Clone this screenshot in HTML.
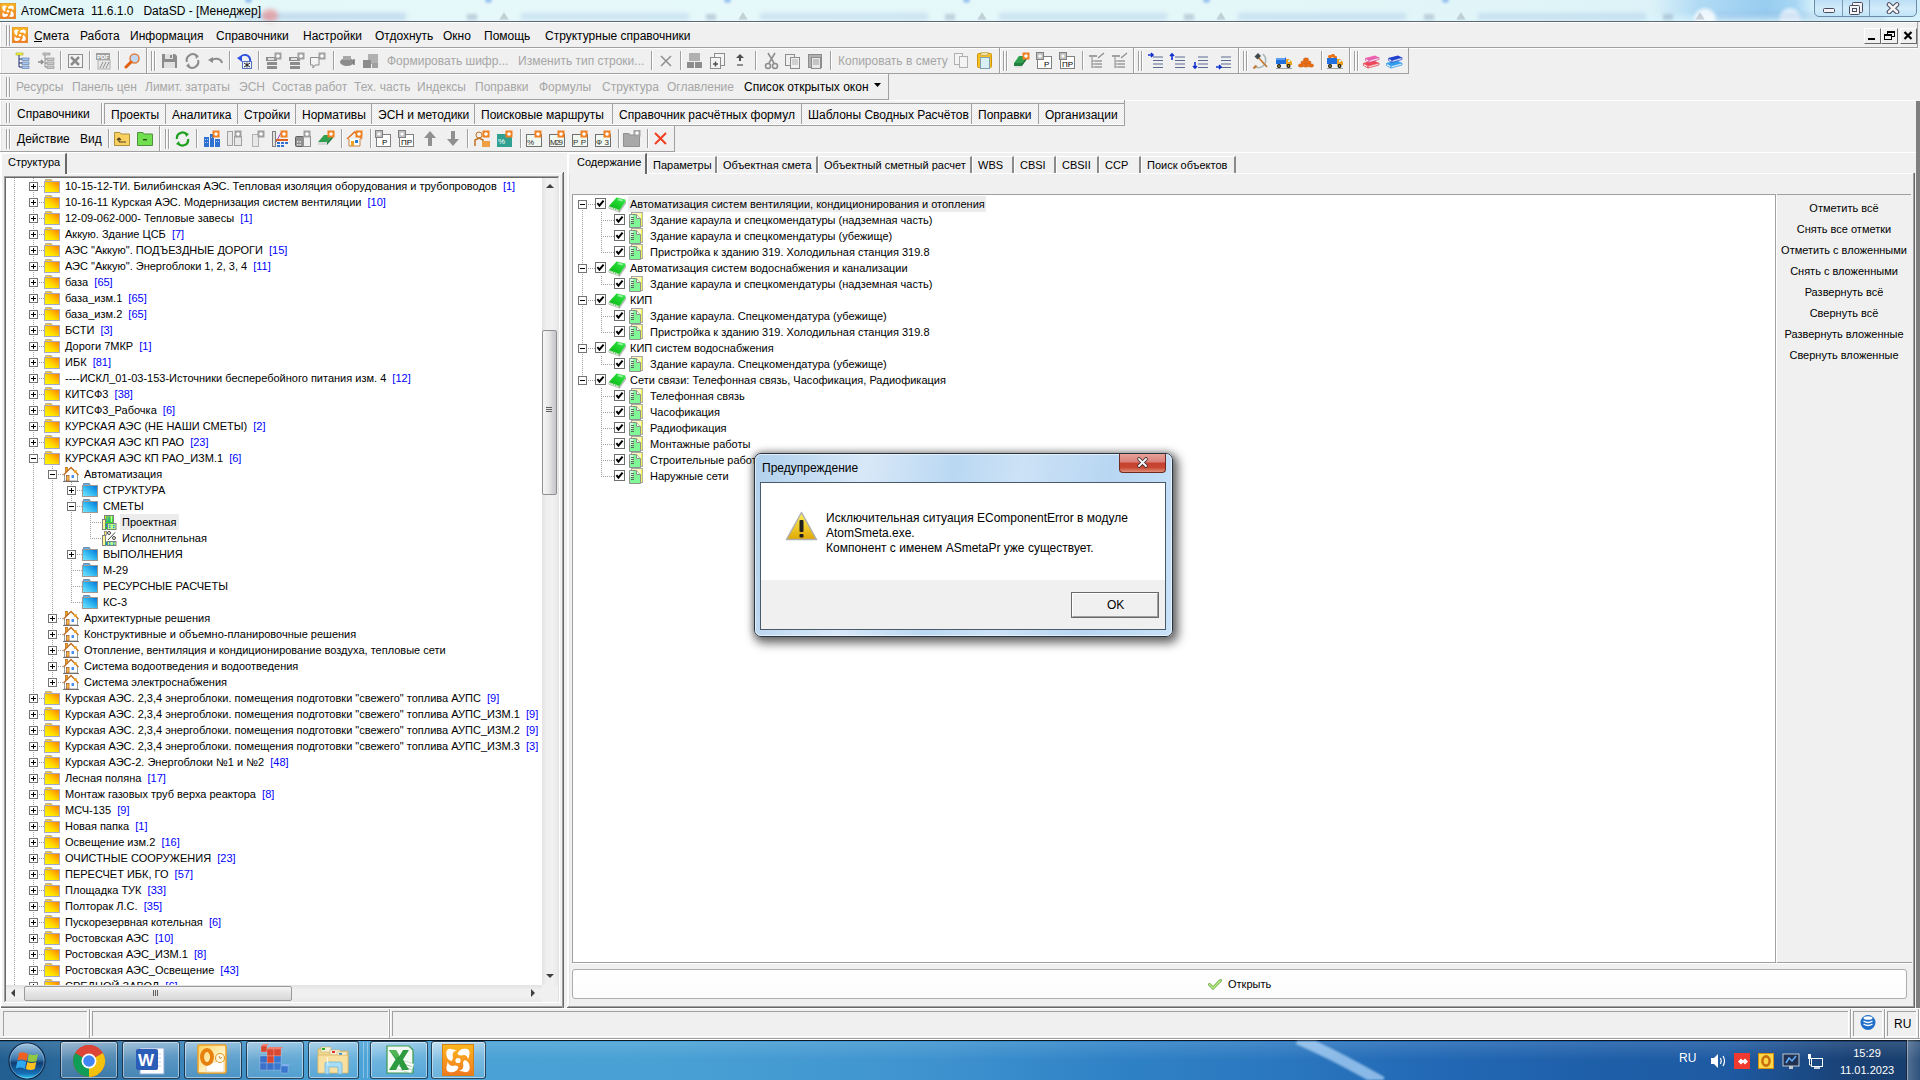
<!DOCTYPE html><html><head><meta charset="utf-8"><style>html,body{margin:0;padding:0;width:1920px;height:1080px;overflow:hidden;background:#f0f0f0}
body{position:relative;font-family:"Liberation Sans",sans-serif}
div{position:absolute}
.t{white-space:nowrap;line-height:1;font-family:"Liberation Sans",sans-serif}</style></head><body><div style="left:0px;top:0px;width:1920px;height:21px;background:linear-gradient(90deg,#e2f6f8 0%,#e6f8fa 30%,#e4f7f9 60%,#e0f5f8 80%,#dcf2f8 86%,#b0daf4 88.5%,#98cdf0 92%,#a8d6f4 93.5%,#d8f2fa 94.5%,#d0eefa 100%)"></div>
<div style="left:1640px;top:0px;width:280px;height:21px;background:radial-gradient(circle at 65px 19px,rgba(255,255,255,0.75) 0 8px,transparent 13px),radial-gradient(circle at 150px 19px,rgba(255,255,255,0.7) 0 8px,transparent 13px),linear-gradient(180deg,rgba(255,255,255,0) 60%,rgba(220,245,252,0.8) 100%)"></div>
<div style="left:467px;top:14px;width:10px;height:6px;background:rgba(120,140,170,0.35);filter:blur(1.5px)"></div>
<div style="left:499px;top:12px;width:10px;height:8px;background:rgba(110,120,135,0.3);clip-path:polygon(50% 0,100% 100%,0 100%);filter:blur(1px)"></div>
<div style="left:521px;top:13px;width:168px;height:7px;background:rgba(120,160,215,0.22);filter:blur(2px)"></div>
<div style="left:706px;top:14px;width:10px;height:6px;background:rgba(120,140,170,0.35);filter:blur(1.5px)"></div>
<div style="left:738px;top:12px;width:10px;height:8px;background:rgba(110,120,135,0.3);clip-path:polygon(50% 0,100% 100%,0 100%);filter:blur(1px)"></div>
<div style="left:760px;top:13px;width:168px;height:7px;background:rgba(120,160,215,0.22);filter:blur(2px)"></div>
<div style="left:945px;top:14px;width:10px;height:6px;background:rgba(120,140,170,0.35);filter:blur(1.5px)"></div>
<div style="left:977px;top:12px;width:10px;height:8px;background:rgba(110,120,135,0.3);clip-path:polygon(50% 0,100% 100%,0 100%);filter:blur(1px)"></div>
<div style="left:999px;top:13px;width:168px;height:7px;background:rgba(120,160,215,0.22);filter:blur(2px)"></div>
<div style="left:1184px;top:14px;width:10px;height:6px;background:rgba(120,140,170,0.35);filter:blur(1.5px)"></div>
<div style="left:1216px;top:12px;width:10px;height:8px;background:rgba(110,120,135,0.3);clip-path:polygon(50% 0,100% 100%,0 100%);filter:blur(1px)"></div>
<div style="left:1238px;top:13px;width:168px;height:7px;background:rgba(120,160,215,0.22);filter:blur(2px)"></div>
<div style="left:1424px;top:14px;width:10px;height:6px;background:rgba(120,140,170,0.35);filter:blur(1.5px)"></div>
<div style="left:1456px;top:12px;width:10px;height:8px;background:rgba(110,120,135,0.3);clip-path:polygon(50% 0,100% 100%,0 100%);filter:blur(1px)"></div>
<div style="left:1478px;top:13px;width:168px;height:7px;background:rgba(120,160,215,0.22);filter:blur(2px)"></div>
<div style="left:1663px;top:14px;width:10px;height:6px;background:rgba(120,140,170,0.35);filter:blur(1.5px)"></div>
<div style="left:1695px;top:12px;width:10px;height:8px;background:rgba(110,120,135,0.3);clip-path:polygon(50% 0,100% 100%,0 100%);filter:blur(1px)"></div>
<div style="left:1717px;top:13px;width:168px;height:7px;background:rgba(120,160,215,0.22);filter:blur(2px)"></div>
<div style="left:236px;top:13px;width:170px;height:7px;background:rgba(120,160,215,0.3);filter:blur(2px)"></div>
<div style="left:262px;top:9px;width:16px;height:13px;background:rgba(240,120,120,0.55);border-radius:50%;filter:blur(2px)"></div>
<div style="left:245px;top:-3px;width:7px;height:6px;background:rgba(90,150,230,0.5);border-radius:50%;filter:blur(1px)"></div>
<div style="left:485px;top:-3px;width:7px;height:6px;background:rgba(90,150,230,0.5);border-radius:50%;filter:blur(1px)"></div>
<div style="left:724px;top:-3px;width:7px;height:6px;background:rgba(90,150,230,0.5);border-radius:50%;filter:blur(1px)"></div>
<div style="left:963px;top:-3px;width:7px;height:6px;background:rgba(90,150,230,0.5);border-radius:50%;filter:blur(1px)"></div>
<div style="left:1203px;top:-3px;width:7px;height:6px;background:rgba(90,150,230,0.5);border-radius:50%;filter:blur(1px)"></div>
<div style="left:1442px;top:-3px;width:7px;height:6px;background:rgba(90,150,230,0.5);border-radius:50%;filter:blur(1px)"></div>
<div style="left:0px;top:21px;width:1920px;height:1px;background:#5b6670"></div>
<svg style="position:absolute;left:0px;top:3px" width="16" height="16" viewBox="0 0 16 16"><defs><linearGradient id="ga1" x1="0" y1="0" x2="0" y2="1"><stop offset="0" stop-color="#fdb81e"/><stop offset="1" stop-color="#f07820"/></linearGradient></defs>
<svg viewBox="0 0 32 32" width="16" height="16"><rect x="0.5" y="0.5" width="31" height="31" fill="url(#ga1)" stroke="#d88010"/>
<g fill="#fff"><path d="M15.5 9.5 Q17.5 4.5 23.5 4.8 Q28 5 27.6 9.5 L26.2 15.5 Q25 10.5 20.5 11.2 Q16.5 12.2 15.5 9.5 Z" transform="rotate(0 16 16.5)"/><path d="M15.5 9.5 Q17.5 4.5 23.5 4.8 Q28 5 27.6 9.5 L26.2 15.5 Q25 10.5 20.5 11.2 Q16.5 12.2 15.5 9.5 Z" transform="rotate(90 16 16.5)"/><path d="M15.5 9.5 Q17.5 4.5 23.5 4.8 Q28 5 27.6 9.5 L26.2 15.5 Q25 10.5 20.5 11.2 Q16.5 12.2 15.5 9.5 Z" transform="rotate(180 16 16.5)"/><path d="M15.5 9.5 Q17.5 4.5 23.5 4.8 Q28 5 27.6 9.5 L26.2 15.5 Q25 10.5 20.5 11.2 Q16.5 12.2 15.5 9.5 Z" transform="rotate(270 16 16.5)"/><circle cx="16" cy="16.5" r="2.6"/></g></svg></svg>
<div class="t" style="left:21px;top:5px;font-size:12px;color:#000;white-space:pre">АтомСмета  11.6.1.0   DataSD - [Менеджер]</div>
<div style="left:1814px;top:-4px;width:103px;height:21px;border:1px solid #6a8ca8;border-radius:0 0 5px 5px;background:linear-gradient(180deg,#b4daf4,#d2ecfa 60%,#c0e4f8);box-sizing:border-box"></div>
<div style="left:1842px;top:0px;width:1px;height:16px;background:#7a9ab8"></div>
<div style="left:1869px;top:0px;width:1px;height:16px;background:#7a9ab8"></div>
<svg style="position:absolute;left:1820px;top:3px" width="20" height="12" viewBox="0 0 20 12"><rect x="3.5" y="5.5" width="11" height="4" rx="1" fill="#f4f4f4" stroke="#4a4a60"/></svg>
<svg style="position:absolute;left:1847px;top:1px" width="18" height="14" viewBox="0 0 18 14"><rect x="5.5" y="1.5" width="10" height="10" rx="1" fill="#f4f4f4" stroke="#4a4a60"/><rect x="2.5" y="4.5" width="10" height="9" rx="1" fill="#f4f4f4" stroke="#4a4a60"/><rect x="5.5" y="7.5" width="4" height="3" fill="none" stroke="#4a4a60"/></svg>
<svg style="position:absolute;left:1884px;top:2px" width="18" height="12" viewBox="0 0 18 12"><path d="M5 2.5 L13 10 M13 2.5 L5 10" stroke="#4a4a60" stroke-width="4.6" stroke-linecap="round"/><path d="M5 2.5 L13 10 M13 2.5 L5 10" stroke="#f4f4f4" stroke-width="2.6" stroke-linecap="round"/></svg>
<div style="left:0px;top:22px;width:1918px;height:1px;background:#ffffff"></div>
<div style="left:0px;top:22px;width:1px;height:990px;background:#ffffff"></div>
<div style="left:1px;top:22px;width:1px;height:990px;background:#e3e3e3"></div>
<div style="left:6px;top:25px;width:1px;height:21px;background:#a0a0a0"></div>
<div style="left:7px;top:25px;width:1px;height:21px;background:#ffffff"></div>
<div style="left:9px;top:25px;width:1px;height:21px;background:#a0a0a0"></div>
<div style="left:10px;top:25px;width:1px;height:21px;background:#ffffff"></div>
<svg style="position:absolute;left:12px;top:27px" width="16" height="16" viewBox="0 0 16 16"><defs><linearGradient id="ga2" x1="0" y1="0" x2="0" y2="1"><stop offset="0" stop-color="#fdb81e"/><stop offset="1" stop-color="#f07820"/></linearGradient></defs>
<svg viewBox="0 0 32 32" width="16" height="16"><rect x="0.5" y="0.5" width="31" height="31" fill="url(#ga2)" stroke="#d88010"/>
<g fill="#fff"><path d="M15.5 9.5 Q17.5 4.5 23.5 4.8 Q28 5 27.6 9.5 L26.2 15.5 Q25 10.5 20.5 11.2 Q16.5 12.2 15.5 9.5 Z" transform="rotate(0 16 16.5)"/><path d="M15.5 9.5 Q17.5 4.5 23.5 4.8 Q28 5 27.6 9.5 L26.2 15.5 Q25 10.5 20.5 11.2 Q16.5 12.2 15.5 9.5 Z" transform="rotate(90 16 16.5)"/><path d="M15.5 9.5 Q17.5 4.5 23.5 4.8 Q28 5 27.6 9.5 L26.2 15.5 Q25 10.5 20.5 11.2 Q16.5 12.2 15.5 9.5 Z" transform="rotate(180 16 16.5)"/><path d="M15.5 9.5 Q17.5 4.5 23.5 4.8 Q28 5 27.6 9.5 L26.2 15.5 Q25 10.5 20.5 11.2 Q16.5 12.2 15.5 9.5 Z" transform="rotate(270 16 16.5)"/><circle cx="16" cy="16.5" r="2.6"/></g></svg></svg>
<div class="t" style="left:34px;top:30px;font-size:12px;color:#000;">Смета</div>
<div class="t" style="left:80px;top:30px;font-size:12px;color:#000;">Работа</div>
<div class="t" style="left:130px;top:30px;font-size:12px;color:#000;">Информация</div>
<div class="t" style="left:216px;top:30px;font-size:12px;color:#000;">Справочники</div>
<div class="t" style="left:303px;top:30px;font-size:12px;color:#000;">Настройки</div>
<div class="t" style="left:375px;top:30px;font-size:12px;color:#000;">Отдохнуть</div>
<div class="t" style="left:443px;top:30px;font-size:12px;color:#000;">Окно</div>
<div class="t" style="left:484px;top:30px;font-size:12px;color:#000;">Помощь</div>
<div class="t" style="left:545px;top:30px;font-size:12px;color:#000;">Структурные справочники</div>
<div style="left:34px;top:41px;width:8px;height:1px;background:#000"></div>
<div style="left:0px;top:47px;width:1918px;height:1px;background:#a0a0a0"></div>
<div style="left:0px;top:48px;width:1918px;height:1px;background:#ffffff"></div>
<div style="left:1864px;top:28px;width:17px;height:16px;box-sizing:border-box;border:1px solid;border-color:#fff #696969 #696969 #fff;background:#f0f0f0"></div>
<div style="left:1881px;top:28px;width:17px;height:16px;box-sizing:border-box;border:1px solid;border-color:#fff #696969 #696969 #fff;background:#f0f0f0"></div>
<div style="left:1900px;top:28px;width:17px;height:16px;box-sizing:border-box;border:1px solid;border-color:#fff #696969 #696969 #fff;background:#f0f0f0"></div>
<svg style="position:absolute;left:1864px;top:28px" width="17" height="16" viewBox="0 0 17 16"><rect x="4" y="10" width="7" height="2" fill="#000"/></svg>
<svg style="position:absolute;left:1881px;top:28px" width="17" height="16" viewBox="0 0 17 16"><rect x="6.5" y="3.5" width="7" height="5" fill="none" stroke="#000"/><rect x="6" y="3" width="8" height="2" fill="#000"/><rect x="3.5" y="6.5" width="7" height="5" fill="#f0f0f0" stroke="#000"/><rect x="3" y="6" width="8" height="2" fill="#000"/></svg>
<svg style="position:absolute;left:1900px;top:28px" width="17" height="16" viewBox="0 0 17 16"><path d="M4.5 4 L11.5 11 M11.5 4 L4.5 11" stroke="#000" stroke-width="2.2"/></svg>
<div style="left:1917px;top:22px;width:1px;height:25px;background:#a0a0a0"></div>
<svg style="position:absolute;left:15px;top:52px" width="18" height="18" viewBox="0 0 18 18"><rect x="1" y="1" width="7" height="2" fill="#ffff40" stroke="#909000" stroke-width="0.5"/><path d="M4 3 V15 M4 7 H7 M4 11 H7 M4 15 H7" stroke="#203070" stroke-width="1"/><rect x="7" y="6" width="7" height="2.5" fill="#a8c8f0" stroke="#5070a0" stroke-width="0.6"/><rect x="7" y="10" width="7" height="2.5" fill="#a8c8f0" stroke="#5070a0" stroke-width="0.6"/><rect x="7" y="14" width="7" height="2.5" fill="#a8c8f0" stroke="#5070a0" stroke-width="0.6"/></svg>
<svg style="position:absolute;left:37px;top:52px" width="18" height="18" viewBox="0 0 18 18"><rect x="6" y="1" width="7" height="2" fill="#c8c8c8" stroke="#8c8c8c" stroke-width="0.6"/><path d="M8 3 V15 M8 7 H10 M8 11 H10 M8 15 H10" stroke="#8c8c8c"/><rect x="10" y="6" width="7" height="2.5" fill="#c8c8c8" stroke="#8c8c8c" stroke-width="0.6"/><rect x="10" y="10" width="7" height="2.5" fill="#c8c8c8" stroke="#8c8c8c" stroke-width="0.6"/><rect x="10" y="14" width="7" height="2.5" fill="#c8c8c8" stroke="#8c8c8c" stroke-width="0.6"/><path d="M1 10 H6 M4 8 L6 10 L4 12" stroke="#8c8c8c" stroke-width="1.5" fill="none"/></svg>
<div style="left:60px;top:51px;width:1px;height:19px;background:#a0a0a0"></div>
<div style="left:61px;top:51px;width:1px;height:19px;background:#ffffff"></div>
<svg style="position:absolute;left:67px;top:52px" width="18" height="18" viewBox="0 0 18 18"><rect x="1.5" y="2.5" width="14" height="13" fill="#f4f4f4" stroke="#8c8c8c"/><path d="M4 5 L12 13 M12 5 L4 13" stroke="#8c8c8c" stroke-width="2.5"/></svg>
<div style="left:89px;top:51px;width:1px;height:19px;background:#a0a0a0"></div>
<div style="left:90px;top:51px;width:1px;height:19px;background:#ffffff"></div>
<svg style="position:absolute;left:95px;top:52px" width="18" height="18" viewBox="0 0 18 18"><rect x="1" y="1" width="14" height="7" fill="#a0a0a0"/><text x="2" y="7" font-size="6" font-family="Liberation Sans" font-weight="bold" fill="#fff">PDF</text><rect x="3" y="8" width="12" height="9" fill="#e8e8e8" stroke="#b0b0b0"/><path d="M5 16 L8 10 M8 16 L11 10 M11 16 L14 10" stroke="#8c8c8c"/></svg>
<div style="left:118px;top:51px;width:1px;height:19px;background:#a0a0a0"></div>
<div style="left:119px;top:51px;width:1px;height:19px;background:#ffffff"></div>
<svg style="position:absolute;left:124px;top:52px" width="18" height="18" viewBox="0 0 18 18"><circle cx="10.5" cy="6.5" r="4.5" fill="#c0d8f8" stroke="#e08040" stroke-width="1.5"/><path d="M7 10 L2 15" stroke="#e06010" stroke-width="3" stroke-linecap="round"/></svg>
<div style="left:0px;top:48px;width:146px;height:1px;background:#ffffff"></div>
<div style="left:0px;top:48px;width:1px;height:25px;background:#ffffff"></div>
<div style="left:0px;top:73px;width:147px;height:1px;background:#a0a0a0"></div>
<div style="left:146px;top:48px;width:1px;height:26px;background:#a0a0a0"></div>
<div style="left:147px;top:48px;width:852px;height:1px;background:#ffffff"></div>
<div style="left:147px;top:48px;width:1px;height:25px;background:#ffffff"></div>
<div style="left:147px;top:73px;width:853px;height:1px;background:#a0a0a0"></div>
<div style="left:999px;top:48px;width:1px;height:26px;background:#a0a0a0"></div>
<div style="left:151px;top:51px;width:1px;height:20px;background:#a0a0a0"></div>
<div style="left:152px;top:51px;width:1px;height:20px;background:#ffffff"></div>
<div style="left:154px;top:51px;width:1px;height:20px;background:#a0a0a0"></div>
<div style="left:155px;top:51px;width:1px;height:20px;background:#ffffff"></div>
<svg style="position:absolute;left:161px;top:52px" width="18" height="18" viewBox="0 0 18 18"><path d="M1 2 H14 L16 4 V16 H1 Z" fill="#8c8c8c"/><rect x="4" y="2" width="8" height="5" fill="#e0e0e0"/><rect x="9" y="3" width="2" height="3" fill="#8c8c8c"/><rect x="3" y="10" width="11" height="6" fill="#e0e0e0"/></svg>
<svg style="position:absolute;left:184px;top:52px" width="18" height="18" viewBox="0 0 18 18"><path d="M3 10 A6 6 0 0 1 13 4" stroke="#8c8c8c" stroke-width="2" fill="none"/><path d="M14 8 A6 6 0 0 1 4 14" stroke="#8c8c8c" stroke-width="2" fill="none"/><path d="M11 2 L15 4 L12 7 Z" fill="#8c8c8c"/><path d="M6 16 L2 14 L5 11 Z" fill="#8c8c8c"/></svg>
<svg style="position:absolute;left:207px;top:52px" width="18" height="18" viewBox="0 0 18 18"><path d="M4 9 A6 5 0 0 1 15 11" stroke="#8c8c8c" stroke-width="2" fill="none"/><path d="M1 8 L6 5 L6 11 Z" fill="#8c8c8c"/></svg>
<div style="left:229px;top:51px;width:1px;height:19px;background:#a0a0a0"></div>
<div style="left:230px;top:51px;width:1px;height:19px;background:#ffffff"></div>
<svg style="position:absolute;left:236px;top:52px" width="18" height="18" viewBox="0 0 18 18"><path d="M4 7 A5 5 0 0 1 14 9" stroke="#3050e0" stroke-width="2" fill="none"/><path d="M1 6 L6 3 L6 10 Z" fill="#3050e0"/><rect x="6.5" y="9.5" width="9" height="7" fill="#f0f4ff" stroke="#5070c0"/><path d="M8 11 L14 15 M14 11 L8 15 M11 10.5 V15.5" stroke="#202020" stroke-width="1"/></svg>
<div style="left:258px;top:51px;width:1px;height:19px;background:#a0a0a0"></div>
<div style="left:259px;top:51px;width:1px;height:19px;background:#ffffff"></div>
<svg style="position:absolute;left:265px;top:52px" width="18" height="18" viewBox="0 0 18 18"><rect x="1" y="5" width="11" height="4" fill="#8c8c8c"/><rect x="2" y="10" width="10" height="3" fill="#8c8c8c"/><rect x="2" y="14" width="10" height="3" fill="#8c8c8c"/><rect x="3" y="6" width="6" height="2" fill="#e0e0e0"/><rect x="9.5" y="0.5" width="7" height="7" fill="#a0a0a0"/><circle cx="13" cy="4" r="1.8" fill="#fff"/></svg>
<svg style="position:absolute;left:288px;top:52px" width="18" height="18" viewBox="0 0 18 18"><rect x="1" y="5" width="11" height="4" fill="#8c8c8c"/><rect x="2" y="10" width="10" height="3" fill="#8c8c8c"/><rect x="2" y="14" width="10" height="3" fill="#8c8c8c"/><rect x="3" y="6" width="6" height="2" fill="#e0e0e0"/><rect x="9.5" y="0.5" width="7" height="7" fill="#a0a0a0"/><circle cx="13" cy="4" r="1.8" fill="#fff"/></svg>
<svg style="position:absolute;left:309px;top:52px" width="18" height="18" viewBox="0 0 18 18"><path d="M1.5 5.5 H10 V13 H6 L4 16 V13 H1.5 Z" fill="#f4f4f4" stroke="#8c8c8c"/><rect x="9.5" y="0.5" width="7" height="7" fill="#a0a0a0"/><circle cx="13" cy="4" r="1.8" fill="#fff"/></svg>
<div style="left:333px;top:51px;width:1px;height:19px;background:#a0a0a0"></div>
<div style="left:334px;top:51px;width:1px;height:19px;background:#ffffff"></div>
<svg style="position:absolute;left:339px;top:52px" width="18" height="18" viewBox="0 0 18 18"><ellipse cx="8" cy="10" rx="7" ry="4" fill="#8c8c8c"/><rect x="4" y="4" width="8" height="4" fill="#a8a8a8"/><path d="M15 7 V13" stroke="#404040"/></svg>
<svg style="position:absolute;left:362px;top:52px" width="18" height="18" viewBox="0 0 18 18"><rect x="6" y="2" width="10" height="10" fill="#b0b0b0"/><rect x="1" y="8" width="8" height="8" fill="#8c8c8c"/><rect x="10" y="11" width="6" height="5" fill="#a0a0a0"/></svg>
<div class="t" style="left:387px;top:55px;font-size:12px;color:#a6a6a6;">Формировать шифр...</div>
<div class="t" style="left:518px;top:55px;font-size:12px;color:#a6a6a6;">Изменить тип строки...</div>
<div style="left:651px;top:51px;width:1px;height:19px;background:#a0a0a0"></div>
<div style="left:652px;top:51px;width:1px;height:19px;background:#ffffff"></div>
<svg style="position:absolute;left:657px;top:52px" width="18" height="18" viewBox="0 0 18 18"><path d="M4 4 L14 14 M14 4 L4 14" stroke="#909090" stroke-width="1.5"/></svg>
<div style="left:680px;top:51px;width:1px;height:19px;background:#a0a0a0"></div>
<div style="left:681px;top:51px;width:1px;height:19px;background:#ffffff"></div>
<svg style="position:absolute;left:686px;top:52px" width="18" height="18" viewBox="0 0 18 18"><rect x="3" y="1" width="11" height="8" fill="#b0b0b0"/><rect x="1" y="10" width="7" height="6" fill="#8c8c8c"/><rect x="9" y="10" width="7" height="6" fill="#8c8c8c"/></svg>
<svg style="position:absolute;left:709px;top:52px" width="18" height="18" viewBox="0 0 18 18"><rect x="5.5" y="1.5" width="10" height="12" fill="#f4f4f4" stroke="#8c8c8c"/><rect x="1.5" y="5.5" width="10" height="11" fill="#f4f4f4" stroke="#8c8c8c"/><path d="M4 12 H9 M6.5 9.5 V14.5" stroke="#505050" stroke-width="1.5"/></svg>
<svg style="position:absolute;left:731px;top:52px" width="18" height="18" viewBox="0 0 18 18"><path d="M9 2 L13 6 H5 Z" fill="#505050"/><rect x="8" y="6" width="2" height="3" fill="#505050"/><rect x="6" y="12" width="6" height="2" fill="#909090"/></svg>
<div style="left:755px;top:51px;width:1px;height:19px;background:#a0a0a0"></div>
<div style="left:756px;top:51px;width:1px;height:19px;background:#ffffff"></div>
<svg style="position:absolute;left:763px;top:52px" width="18" height="18" viewBox="0 0 18 18"><path d="M5 1 L11 11 M12 1 L6 11" stroke="#8c8c8c" stroke-width="1.5"/><circle cx="5" cy="14" r="2.5" fill="none" stroke="#8c8c8c" stroke-width="1.5"/><circle cx="12" cy="14" r="2.5" fill="none" stroke="#8c8c8c" stroke-width="1.5"/></svg>
<svg style="position:absolute;left:784px;top:52px" width="18" height="18" viewBox="0 0 18 18"><rect x="1.5" y="2.5" width="9" height="11" fill="#f0f0f0" stroke="#8c8c8c"/><rect x="6.5" y="5.5" width="9" height="11" fill="#f0f0f0" stroke="#8c8c8c"/><path d="M8 8 H14 M8 10 H14 M8 12 H14" stroke="#b0b0b0"/></svg>
<svg style="position:absolute;left:807px;top:52px" width="18" height="18" viewBox="0 0 18 18"><rect x="1.5" y="2.5" width="13" height="13" fill="#b0b0b0" stroke="#8c8c8c"/><rect x="4.5" y="5.5" width="9" height="11" fill="#e8e8e8" stroke="#8c8c8c"/><path d="M6 8 H12 M6 10 H12 M6 12 H12" stroke="#a0a0a0"/></svg>
<div style="left:830px;top:51px;width:1px;height:19px;background:#a0a0a0"></div>
<div style="left:831px;top:51px;width:1px;height:19px;background:#ffffff"></div>
<div class="t" style="left:838px;top:55px;font-size:12px;color:#a6a6a6;">Копировать в смету</div>
<svg style="position:absolute;left:953px;top:52px" width="18" height="18" viewBox="0 0 18 18"><rect x="1.5" y="1.5" width="8" height="11" fill="#f4f4f4" stroke="#b0b0b0"/><rect x="6.5" y="4.5" width="8" height="11" fill="#f4f4f4" stroke="#b0b0b0"/></svg>
<svg style="position:absolute;left:976px;top:52px" width="18" height="18" viewBox="0 0 18 18"><rect x="1.5" y="1.5" width="14" height="14" rx="1" fill="#f8c020" stroke="#d09010"/><rect x="5" y="0.5" width="7" height="3" fill="#f0e0a0" stroke="#c0a040" stroke-width="0.6"/><rect x="4.5" y="5.5" width="9" height="11" fill="#d8f0f4" stroke="#80a0b0"/></svg>
<div style="left:1000px;top:48px;width:133px;height:1px;background:#ffffff"></div>
<div style="left:1000px;top:48px;width:1px;height:25px;background:#ffffff"></div>
<div style="left:1000px;top:73px;width:134px;height:1px;background:#a0a0a0"></div>
<div style="left:1133px;top:48px;width:1px;height:26px;background:#a0a0a0"></div>
<div style="left:1003px;top:51px;width:1px;height:20px;background:#a0a0a0"></div>
<div style="left:1004px;top:51px;width:1px;height:20px;background:#ffffff"></div>
<div style="left:1006px;top:51px;width:1px;height:20px;background:#a0a0a0"></div>
<div style="left:1007px;top:51px;width:1px;height:20px;background:#ffffff"></div>
<svg style="position:absolute;left:1013px;top:52px" width="18" height="18" viewBox="0 0 18 18"><path d="M1 11 L6 4 H14 L9 11 Z" fill="#30a050"/><path d="M1 11 H9 V14 H1 Z" fill="#208040"/><path d="M9 11 L14 4 V7 L9 14 Z" fill="#187030"/><path d="M2 14 H9 V16 H2 Z" fill="#e0e0e0"/><rect x="9.5" y="0.5" width="7" height="7" fill="#f08020"/><circle cx="13" cy="4" r="1.8" fill="#fff"/></svg>
<svg style="position:absolute;left:1036px;top:52px" width="18" height="18" viewBox="0 0 18 18"><rect x="1.5" y="4.5" width="14" height="12" fill="#fff" stroke="#808080"/><text x="8" y="15" font-size="8" font-family="Liberation Sans" fill="#000">P</text><rect x="0.5" y="0.5" width="7" height="7" fill="#c0c0c0" stroke="#808080"/><circle cx="4" cy="4" r="1.6" fill="#fff"/></svg>
<svg style="position:absolute;left:1059px;top:52px" width="18" height="18" viewBox="0 0 18 18"><rect x="1.5" y="4.5" width="14" height="12" fill="#fff" stroke="#808080"/><text x="3" y="15" font-size="8" font-family="Liberation Sans" fill="#000">ПР</text><rect x="0.5" y="0.5" width="7" height="7" fill="#c0c0c0" stroke="#808080"/><circle cx="4" cy="4" r="1.6" fill="#fff"/></svg>
<div style="left:1082px;top:51px;width:1px;height:19px;background:#a0a0a0"></div>
<div style="left:1083px;top:51px;width:1px;height:19px;background:#ffffff"></div>
<svg style="position:absolute;left:1088px;top:52px" width="18" height="18" viewBox="0 0 18 18"><rect x="1" y="3" width="8" height="2" fill="#a0a0a0"/><path d="M4 5 V16 M4 9 H7 M4 12 H7 M4 15 H7" stroke="#8c8c8c"/><rect x="7" y="8" width="7" height="2" fill="#b0b0b0"/><rect x="7" y="11" width="7" height="2" fill="#b0b0b0"/><rect x="7" y="14" width="7" height="2" fill="#b0b0b0"/><path d="M10 6 L16 1" stroke="#8c8c8c" stroke-width="1.2"/></svg>
<svg style="position:absolute;left:1111px;top:52px" width="18" height="18" viewBox="0 0 18 18"><rect x="1" y="3" width="8" height="2" fill="#a0a0a0"/><path d="M4 5 V16 M4 9 H7 M4 12 H7 M4 15 H7" stroke="#8c8c8c"/><rect x="7" y="8" width="7" height="2" fill="#b0b0b0"/><rect x="7" y="11" width="7" height="2" fill="#b0b0b0"/><rect x="7" y="14" width="7" height="2" fill="#b0b0b0"/><path d="M10 6 L16 1" stroke="#8c8c8c" stroke-width="1.2"/></svg>
<div style="left:1134px;top:48px;width:104px;height:1px;background:#ffffff"></div>
<div style="left:1134px;top:48px;width:1px;height:25px;background:#ffffff"></div>
<div style="left:1134px;top:73px;width:105px;height:1px;background:#a0a0a0"></div>
<div style="left:1238px;top:48px;width:1px;height:26px;background:#a0a0a0"></div>
<div style="left:1138px;top:51px;width:1px;height:20px;background:#a0a0a0"></div>
<div style="left:1139px;top:51px;width:1px;height:20px;background:#ffffff"></div>
<div style="left:1141px;top:51px;width:1px;height:20px;background:#a0a0a0"></div>
<div style="left:1142px;top:51px;width:1px;height:20px;background:#ffffff"></div>
<svg style="position:absolute;left:1147px;top:52px" width="18" height="18" viewBox="0 0 18 18"><path d="M6 5 H16 M6 8.5 H16 M6 12 H16 M6 15.5 H16" stroke="#5a6a90" stroke-width="1.2"/><path d="M1 3 H6 M4 1 L6 3 L4 5" stroke="#1030d0" stroke-width="1.6" fill="none"/></svg>
<svg style="position:absolute;left:1169px;top:52px" width="18" height="18" viewBox="0 0 18 18"><path d="M6 5 H16 M6 8.5 H16 M6 12 H16 M6 15.5 H16" stroke="#5a6a90" stroke-width="1.2"/><path d="M3 8 V2 M1 4 L3 2 L5 4" stroke="#1030d0" stroke-width="1.6" fill="none"/></svg>
<svg style="position:absolute;left:1192px;top:52px" width="18" height="18" viewBox="0 0 18 18"><path d="M6 5 H16 M6 8.5 H16 M6 12 H16 M6 15.5 H16" stroke="#5a6a90" stroke-width="1.2"/><path d="M3 10 V16 M1 14 L3 16 L5 14" stroke="#1030d0" stroke-width="1.6" fill="none"/></svg>
<svg style="position:absolute;left:1215px;top:52px" width="18" height="18" viewBox="0 0 18 18"><path d="M6 5 H16 M6 8.5 H16 M6 12 H16 M6 15.5 H16" stroke="#5a6a90" stroke-width="1.2"/><path d="M1 15 H6 M4 13 L6 15 L4 17" stroke="#1030d0" stroke-width="1.6" fill="none"/></svg>
<div style="left:1239px;top:48px;width:110px;height:1px;background:#ffffff"></div>
<div style="left:1239px;top:48px;width:1px;height:25px;background:#ffffff"></div>
<div style="left:1239px;top:73px;width:111px;height:1px;background:#a0a0a0"></div>
<div style="left:1349px;top:48px;width:1px;height:26px;background:#a0a0a0"></div>
<div style="left:1243px;top:51px;width:1px;height:20px;background:#a0a0a0"></div>
<div style="left:1244px;top:51px;width:1px;height:20px;background:#ffffff"></div>
<div style="left:1246px;top:51px;width:1px;height:20px;background:#a0a0a0"></div>
<div style="left:1247px;top:51px;width:1px;height:20px;background:#ffffff"></div>
<svg style="position:absolute;left:1252px;top:52px" width="18" height="18" viewBox="0 0 18 18"><path d="M4 15 C10 18 18 10 11 2" stroke="#a8b8b8" stroke-width="1.6" fill="none"/><path d="M1.5 16.5 L4.5 13.5" stroke="#c07830" stroke-width="2.2"/><path d="M6 5 L15 15" stroke="#c07830" stroke-width="1.8"/><path d="M2.5 4.5 L6 1 L9 4 L5.5 7.5 Z" fill="#404850"/></svg>
<svg style="position:absolute;left:1275px;top:52px" width="18" height="18" viewBox="0 0 18 18"><path d="M1 6 H10 L11 5 V12 H1 Z" fill="#2070e0"/><path d="M1 6 H10 V8 H1 Z" fill="#60a0f0"/><path d="M11 7 H14 L17 10 V13 H11 Z" fill="#f0a020"/><rect x="13" y="8" width="2" height="2" fill="#c0f0ff"/><circle cx="4" cy="14" r="2" fill="#101010"/><circle cx="13.5" cy="14" r="2" fill="#101010"/><circle cx="4" cy="14" r="0.8" fill="#f0e040"/><circle cx="13.5" cy="14" r="0.8" fill="#f0e040"/><rect x="1" y="16" width="16" height="1" fill="#a0a0a0"/></svg>
<svg style="position:absolute;left:1297px;top:52px" width="18" height="18" viewBox="0 0 18 18"><g fill="#f07010" stroke="#c04800" stroke-width="0.5"><rect x="6.5" y="6" width="5" height="3" rx="1.5"/><rect x="4" y="9" width="5" height="3" rx="1.5"/><rect x="9" y="9" width="5" height="3" rx="1.5"/><rect x="1.5" y="12" width="5" height="3" rx="1.5"/><rect x="6.5" y="12" width="5" height="3" rx="1.5"/><rect x="11.5" y="12" width="5" height="3" rx="1.5"/></g></svg>
<div style="left:1321px;top:51px;width:1px;height:19px;background:#a0a0a0"></div>
<div style="left:1322px;top:51px;width:1px;height:19px;background:#ffffff"></div>
<svg style="position:absolute;left:1326px;top:52px" width="18" height="18" viewBox="0 0 18 18"><path d="M1 6 H10 L11 5 V12 H1 Z" fill="#2070e0"/><g fill="#f07010"><rect x="2" y="3" width="4" height="3" rx="1.5"/><rect x="5" y="2" width="4" height="3" rx="1.5"/><rect x="7" y="4" width="4" height="2" rx="1"/></g><path d="M11 7 H14 L17 10 V13 H11 Z" fill="#f0a020"/><rect x="13" y="8" width="2" height="2" fill="#c0f0ff"/><circle cx="4" cy="14" r="2" fill="#101010"/><circle cx="13.5" cy="14" r="2" fill="#101010"/><circle cx="4" cy="14" r="0.8" fill="#f0e040"/><circle cx="13.5" cy="14" r="0.8" fill="#f0e040"/><rect x="1" y="16" width="16" height="1" fill="#a0a0a0"/></svg>
<div style="left:1350px;top:48px;width:58px;height:1px;background:#ffffff"></div>
<div style="left:1350px;top:48px;width:1px;height:25px;background:#ffffff"></div>
<div style="left:1350px;top:73px;width:59px;height:1px;background:#a0a0a0"></div>
<div style="left:1408px;top:48px;width:1px;height:26px;background:#a0a0a0"></div>
<div style="left:1354px;top:51px;width:1px;height:20px;background:#a0a0a0"></div>
<div style="left:1355px;top:51px;width:1px;height:20px;background:#ffffff"></div>
<div style="left:1357px;top:51px;width:1px;height:20px;background:#a0a0a0"></div>
<div style="left:1358px;top:51px;width:1px;height:20px;background:#ffffff"></div>
<svg style="position:absolute;left:1362px;top:52px" width="18" height="18" viewBox="0 0 18 18"><path d="M1 11 L12 8.5 L17 11 L6 14 Z" fill="#f04858"/><path d="M1.5 11.5 L6 14 V16 L1.5 13.5 Z" fill="#fff" stroke="#e03040" stroke-width="0.7"/><path d="M6 14 L17 11 V13 L6 16 Z" fill="#f8e0e0" stroke="#e03040" stroke-width="0.7"/><path d="M3 6 L13 3.5 L17 5.5 L7 8.5 Z" fill="#f060b0"/><path d="M3.5 6.5 L7 8.5 V10.5 L3.5 8.5 Z" fill="#fff" stroke="#d04090" stroke-width="0.7"/><path d="M7 8.5 L17 5.5 V7.5 L7 10.5 Z" fill="#f8e8f0" stroke="#d04090" stroke-width="0.7"/></svg>
<svg style="position:absolute;left:1385px;top:52px" width="18" height="18" viewBox="0 0 18 18"><path d="M1 11 L12 8.5 L17 11 L6 14 Z" fill="#30a0f0"/><path d="M1.5 11.5 L6 14 V16 L1.5 13.5 Z" fill="#fff" stroke="#2090e0" stroke-width="0.7"/><path d="M6 14 L17 11 V13 L6 16 Z" fill="#e0f0ff" stroke="#2090e0" stroke-width="0.7"/><path d="M3 6 L13 3.5 L17 5.5 L7 8.5 Z" fill="#2040d0"/><path d="M3.5 6.5 L7 8.5 V10.5 L3.5 8.5 Z" fill="#fff" stroke="#2040c0" stroke-width="0.7"/><path d="M7 8.5 L17 5.5 V7.5 L7 10.5 Z" fill="#e0e8ff" stroke="#2040c0" stroke-width="0.7"/></svg>
<div style="left:0px;top:74px;width:888px;height:1px;background:#ffffff"></div>
<div style="left:0px;top:74px;width:1px;height:25px;background:#ffffff"></div>
<div style="left:0px;top:99px;width:889px;height:1px;background:#a0a0a0"></div>
<div style="left:888px;top:74px;width:1px;height:26px;background:#a0a0a0"></div>
<div style="left:6px;top:77px;width:1px;height:20px;background:#a0a0a0"></div>
<div style="left:7px;top:77px;width:1px;height:20px;background:#ffffff"></div>
<div style="left:9px;top:77px;width:1px;height:20px;background:#a0a0a0"></div>
<div style="left:10px;top:77px;width:1px;height:20px;background:#ffffff"></div>
<div class="t" style="left:16px;top:81px;font-size:12px;color:#a6a6a6;">Ресурсы</div>
<div class="t" style="left:72px;top:81px;font-size:12px;color:#a6a6a6;">Панель цен</div>
<div class="t" style="left:145px;top:81px;font-size:12px;color:#a6a6a6;">Лимит. затраты</div>
<div class="t" style="left:239px;top:81px;font-size:12px;color:#a6a6a6;">ЭСН</div>
<div class="t" style="left:272px;top:81px;font-size:12px;color:#a6a6a6;">Состав работ</div>
<div class="t" style="left:354px;top:81px;font-size:12px;color:#a6a6a6;">Тех. часть</div>
<div class="t" style="left:417px;top:81px;font-size:12px;color:#a6a6a6;">Индексы</div>
<div class="t" style="left:475px;top:81px;font-size:12px;color:#a6a6a6;">Поправки</div>
<div class="t" style="left:539px;top:81px;font-size:12px;color:#a6a6a6;">Формулы</div>
<div class="t" style="left:602px;top:81px;font-size:12px;color:#a6a6a6;">Структура</div>
<div class="t" style="left:667px;top:81px;font-size:12px;color:#a6a6a6;">Оглавление</div>
<div class="t" style="left:744px;top:81px;font-size:12px;color:#000;">Список открытых окон</div>
<svg style="position:absolute;left:874px;top:83px" width="8" height="5" viewBox="0 0 8 5"><path d="M0 0 H7 L3.5 4 Z" fill="#000"/></svg>
<div style="left:0px;top:100px;width:1916px;height:1px;background:#ffffff"></div>
<div style="left:0px;top:100px;width:1124px;height:1px;background:#ffffff"></div>
<div style="left:0px;top:100px;width:1px;height:25px;background:#ffffff"></div>
<div style="left:0px;top:125px;width:1125px;height:1px;background:#a0a0a0"></div>
<div style="left:1124px;top:100px;width:1px;height:26px;background:#a0a0a0"></div>
<div style="left:6px;top:103px;width:1px;height:20px;background:#a0a0a0"></div>
<div style="left:7px;top:103px;width:1px;height:20px;background:#ffffff"></div>
<div style="left:9px;top:103px;width:1px;height:20px;background:#a0a0a0"></div>
<div style="left:10px;top:103px;width:1px;height:20px;background:#ffffff"></div>
<div class="t" style="left:17px;top:108px;font-size:12px;color:#000;">Справочники</div>
<div style="left:101px;top:103px;width:1px;height:21px;background:#a0a0a0"></div>
<div style="left:102px;top:103px;width:1px;height:21px;background:#ffffff"></div>
<div style="left:104px;top:103px;width:61px;height:22px;box-sizing:border-box;border-top:1px solid #a0a0a0;border-left:1px solid #a0a0a0;background:repeating-conic-gradient(#fafafa 0 25%,#eaeaea 0 50%) 0 0/2px 2px"></div>
<div class="t" style="left:111px;top:109px;font-size:12px;color:#000;">Проекты</div>
<div style="left:165px;top:103px;width:72px;height:22px;box-sizing:border-box;border-top:1px solid #a0a0a0;border-left:1px solid #a0a0a0;background:repeating-conic-gradient(#fafafa 0 25%,#eaeaea 0 50%) 0 0/2px 2px"></div>
<div class="t" style="left:172px;top:109px;font-size:12px;color:#000;">Аналитика</div>
<div style="left:237px;top:103px;width:58px;height:22px;box-sizing:border-box;border-top:1px solid #a0a0a0;border-left:1px solid #a0a0a0;background:repeating-conic-gradient(#fafafa 0 25%,#eaeaea 0 50%) 0 0/2px 2px"></div>
<div class="t" style="left:244px;top:109px;font-size:12px;color:#000;">Стройки</div>
<div style="left:295px;top:103px;width:76px;height:22px;box-sizing:border-box;border-top:1px solid #a0a0a0;border-left:1px solid #a0a0a0;background:repeating-conic-gradient(#fafafa 0 25%,#eaeaea 0 50%) 0 0/2px 2px"></div>
<div class="t" style="left:302px;top:109px;font-size:12px;color:#000;">Нормативы</div>
<div style="left:371px;top:103px;width:103px;height:22px;box-sizing:border-box;border-top:1px solid #a0a0a0;border-left:1px solid #a0a0a0;background:repeating-conic-gradient(#fafafa 0 25%,#eaeaea 0 50%) 0 0/2px 2px"></div>
<div class="t" style="left:378px;top:109px;font-size:12px;color:#000;">ЭСН и методики</div>
<div style="left:474px;top:103px;width:138px;height:22px;box-sizing:border-box;border-top:1px solid #a0a0a0;border-left:1px solid #a0a0a0;background:repeating-conic-gradient(#fafafa 0 25%,#eaeaea 0 50%) 0 0/2px 2px"></div>
<div class="t" style="left:481px;top:109px;font-size:12px;color:#000;">Поисковые маршруты</div>
<div style="left:612px;top:103px;width:189px;height:22px;box-sizing:border-box;border-top:1px solid #a0a0a0;border-left:1px solid #a0a0a0;background:repeating-conic-gradient(#fafafa 0 25%,#eaeaea 0 50%) 0 0/2px 2px"></div>
<div class="t" style="left:619px;top:109px;font-size:12px;color:#000;">Справочник расчётных формул</div>
<div style="left:801px;top:103px;width:170px;height:22px;box-sizing:border-box;border-top:1px solid #a0a0a0;border-left:1px solid #a0a0a0;background:repeating-conic-gradient(#fafafa 0 25%,#eaeaea 0 50%) 0 0/2px 2px"></div>
<div class="t" style="left:808px;top:109px;font-size:12px;color:#000;">Шаблоны Сводных Расчётов</div>
<div style="left:971px;top:103px;width:67px;height:22px;box-sizing:border-box;border-top:1px solid #a0a0a0;border-left:1px solid #a0a0a0;background:repeating-conic-gradient(#fafafa 0 25%,#eaeaea 0 50%) 0 0/2px 2px"></div>
<div class="t" style="left:978px;top:109px;font-size:12px;color:#000;">Поправки</div>
<div style="left:1038px;top:103px;width:86px;height:22px;box-sizing:border-box;border-top:1px solid #a0a0a0;border-left:1px solid #a0a0a0;background:repeating-conic-gradient(#fafafa 0 25%,#eaeaea 0 50%) 0 0/2px 2px"></div>
<div class="t" style="left:1045px;top:109px;font-size:12px;color:#000;">Организации</div>
<div style="left:104px;top:124px;width:1020px;height:1px;background:#ffffff"></div>
<div style="left:0px;top:152px;width:1916px;height:1px;background:#ffffff"></div>
<div style="left:0px;top:126px;width:159px;height:1px;background:#ffffff"></div>
<div style="left:0px;top:126px;width:1px;height:25px;background:#ffffff"></div>
<div style="left:0px;top:151px;width:160px;height:1px;background:#a0a0a0"></div>
<div style="left:159px;top:126px;width:1px;height:26px;background:#a0a0a0"></div>
<div style="left:6px;top:129px;width:1px;height:20px;background:#a0a0a0"></div>
<div style="left:7px;top:129px;width:1px;height:20px;background:#ffffff"></div>
<div style="left:9px;top:129px;width:1px;height:20px;background:#a0a0a0"></div>
<div style="left:10px;top:129px;width:1px;height:20px;background:#ffffff"></div>
<div class="t" style="left:17px;top:133px;font-size:12px;color:#000;">Действие</div>
<div class="t" style="left:80px;top:133px;font-size:12px;color:#000;">Вид</div>
<div style="left:108px;top:129px;width:1px;height:19px;background:#a0a0a0"></div>
<div style="left:109px;top:129px;width:1px;height:19px;background:#ffffff"></div>
<svg style="position:absolute;left:114px;top:130px" width="17" height="17" viewBox="0 0 17 17"><path d="M0.5 2.5 H6 L7 4 H15.5 V15.5 H0.5 Z" fill="#f8d060" stroke="#b09040"/><path d="M5 12 H12 M5 12 V8 M3 10 L5 8 L7 10" stroke="#504020" stroke-width="1.2" fill="none"/></svg>
<svg style="position:absolute;left:137px;top:130px" width="17" height="17" viewBox="0 0 17 17"><path d="M0.5 2.5 H6 L7 4 H15.5 V15.5 H0.5 Z" fill="#70e050" stroke="#509040"/><rect x="6" y="9" width="4" height="1.4" fill="#305020"/></svg>
<div style="left:160px;top:126px;width:514px;height:1px;background:#ffffff"></div>
<div style="left:160px;top:126px;width:1px;height:25px;background:#ffffff"></div>
<div style="left:160px;top:151px;width:515px;height:1px;background:#a0a0a0"></div>
<div style="left:674px;top:126px;width:1px;height:26px;background:#a0a0a0"></div>
<div style="left:165px;top:129px;width:1px;height:20px;background:#a0a0a0"></div>
<div style="left:166px;top:129px;width:1px;height:20px;background:#ffffff"></div>
<div style="left:168px;top:129px;width:1px;height:20px;background:#a0a0a0"></div>
<div style="left:169px;top:129px;width:1px;height:20px;background:#ffffff"></div>
<svg style="position:absolute;left:174px;top:130px" width="18" height="18" viewBox="0 0 18 18"><path d="M3 9 A5.5 5.5 0 0 1 13 5" stroke="#20a020" stroke-width="2.2" fill="none"/><path d="M14 9 A5.5 5.5 0 0 1 4 13" stroke="#20a020" stroke-width="2.2" fill="none"/><path d="M11 2 L15 4 L12 7 Z" fill="#20a020"/><path d="M6 16 L2 14 L5 11 Z" fill="#20a020"/></svg>
<div style="left:196px;top:129px;width:1px;height:19px;background:#a0a0a0"></div>
<div style="left:197px;top:129px;width:1px;height:19px;background:#ffffff"></div>
<svg style="position:absolute;left:203px;top:130px" width="18" height="18" viewBox="0 0 18 18"><rect x="1" y="7" width="5" height="10" fill="#3070d0"/><rect x="7" y="4" width="4" height="13" fill="#3070d0"/><rect x="12" y="9" width="5" height="8" fill="#3070d0"/><g fill="#a0d0ff"><rect x="2" y="9" width="1" height="1"/><rect x="4" y="9" width="1" height="1"/><rect x="2" y="12" width="1" height="1"/><rect x="4" y="12" width="1" height="1"/><rect x="8" y="7" width="1" height="1"/><rect x="13" y="11" width="1" height="1"/><rect x="15" y="11" width="1" height="1"/></g><rect x="9.5" y="0.5" width="7" height="7" fill="#f08020"/><circle cx="13" cy="4" r="1.8" fill="#fff"/></svg>
<svg style="position:absolute;left:226px;top:130px" width="18" height="18" viewBox="0 0 18 18"><rect x="1.5" y="1.5" width="5" height="14" fill="#e8e8e8" stroke="#a0a0a0"/><rect x="8.5" y="6.5" width="7" height="9" fill="#e8e8e8" stroke="#a0a0a0"/><rect x="8.5" y="0.5" width="7" height="7" fill="#a0a0a0"/><circle cx="12" cy="4" r="1.8" fill="#fff"/></svg>
<svg style="position:absolute;left:251px;top:130px" width="18" height="18" viewBox="0 0 18 18"><rect x="1.5" y="4.5" width="6" height="12" fill="#e8e8e8" stroke="#b0b0b0"/><rect x="6.5" y="0.5" width="7" height="7" fill="#a0a0a0"/><circle cx="10" cy="4" r="1.8" fill="#fff"/></svg>
<svg style="position:absolute;left:271px;top:130px" width="18" height="18" viewBox="0 0 18 18"><rect x="1.5" y="1.5" width="3" height="15" fill="#e0e0e0" stroke="#808080"/><path d="M5 12 L10 3" stroke="#a040c0"/><rect x="5" y="9" width="12" height="2" fill="#e06020"/><g fill="#3070d0"><rect x="6" y="12" width="3" height="2"/><rect x="10" y="12" width="3" height="2"/><rect x="14" y="12" width="3" height="2"/><rect x="6" y="15" width="3" height="2"/><rect x="10" y="15" width="3" height="2"/></g><rect x="9.5" y="0.5" width="7" height="7" fill="#f08020"/><circle cx="13" cy="4" r="1.8" fill="#fff"/></svg>
<svg style="position:absolute;left:294px;top:130px" width="18" height="18" viewBox="0 0 18 18"><rect x="1.5" y="6.5" width="8" height="10" rx="1" fill="#909090" stroke="#606060"/><g fill="#e0e0e0"><rect x="3" y="11" width="1.5" height="1.5"/><rect x="5.5" y="11" width="1.5" height="1.5"/><rect x="3" y="14" width="1.5" height="1.5"/><rect x="5.5" y="14" width="1.5" height="1.5"/></g><rect x="9.5" y="6.5" width="7" height="10" fill="#f0f0f0" stroke="#909090"/><rect x="9.5" y="0.5" width="7" height="7" fill="#a0a0a0"/><circle cx="13" cy="4" r="1.8" fill="#fff"/></svg>
<svg style="position:absolute;left:317px;top:130px" width="18" height="18" viewBox="0 0 18 18"><path d="M1 12 L7 5 H16 L10 12 Z" fill="#30a050"/><path d="M1 12 H10 V15 H1 Z" fill="#d8d8d8"/><path d="M10 12 L16 5 V8 L10 15 Z" fill="#208040"/><rect x="10.5" y="0.5" width="7" height="7" fill="#f08020"/><circle cx="14" cy="4" r="1.8" fill="#fff"/></svg>
<div style="left:341px;top:129px;width:1px;height:19px;background:#a0a0a0"></div>
<div style="left:342px;top:129px;width:1px;height:19px;background:#ffffff"></div>
<svg style="position:absolute;left:346px;top:130px" width="18" height="18" viewBox="0 0 18 18"><path d="M1 9 L8.5 2 L16 9" fill="none" stroke="#e07020" stroke-width="1.5"/><path d="M3 9 V16 H14 V9" fill="#fff" stroke="#c08040"/><rect x="5" y="11" width="3" height="5" fill="#f0a020"/><rect x="9" y="10" width="3" height="3" fill="#2878d8"/><rect x="9.5" y="0.5" width="7" height="7" fill="#f08020"/><circle cx="13" cy="4" r="1.8" fill="#fff"/></svg>
<div style="left:370px;top:129px;width:1px;height:19px;background:#a0a0a0"></div>
<div style="left:371px;top:129px;width:1px;height:19px;background:#ffffff"></div>
<svg style="position:absolute;left:375px;top:130px" width="18" height="18" viewBox="0 0 18 18"><rect x="1.5" y="4.5" width="14" height="12" fill="#fff" stroke="#808080"/><text x="7" y="15" font-size="8" font-family="Liberation Sans" fill="#000">P</text><rect x="0.5" y="0.5" width="7" height="7" fill="#c0c0c0" stroke="#808080"/><circle cx="4" cy="4" r="1.6" fill="#fff"/></svg>
<svg style="position:absolute;left:398px;top:130px" width="18" height="18" viewBox="0 0 18 18"><rect x="1.5" y="4.5" width="14" height="12" fill="#fff" stroke="#808080"/><text x="3" y="15" font-size="8" font-family="Liberation Sans" fill="#000">ПР</text><rect x="0.5" y="0.5" width="7" height="7" fill="#c0c0c0" stroke="#808080"/><circle cx="4" cy="4" r="1.6" fill="#fff"/></svg>
<svg style="position:absolute;left:422px;top:130px" width="18" height="18" viewBox="0 0 18 18"><path d="M8 1 L14 8 H10 V16 H6 V8 H2 Z" fill="#909090"/></svg>
<svg style="position:absolute;left:445px;top:130px" width="18" height="18" viewBox="0 0 18 18"><path d="M8 16 L14 9 H10 V1 H6 V9 H2 Z" fill="#909090"/></svg>
<div style="left:467px;top:129px;width:1px;height:19px;background:#a0a0a0"></div>
<div style="left:468px;top:129px;width:1px;height:19px;background:#ffffff"></div>
<svg style="position:absolute;left:473px;top:130px" width="18" height="18" viewBox="0 0 18 18"><circle cx="6" cy="5" r="3" fill="none" stroke="#c07020"/><path d="M2 16 V10 L6 8 L10 10 V16" fill="none" stroke="#c07020" stroke-width="1.5"/><rect x="9" y="11" width="8" height="6" fill="#f0a040"/><rect x="9.5" y="0.5" width="7" height="7" fill="#f08020"/><circle cx="13" cy="4" r="1.8" fill="#fff"/></svg>
<svg style="position:absolute;left:496px;top:130px" width="18" height="18" viewBox="0 0 18 18"><rect x="1" y="4" width="15" height="13" fill="#30a090"/><text x="2" y="14" font-size="8" font-family="Liberation Sans" fill="#fff">%</text><rect x="9.5" y="0.5" width="7" height="7" fill="#f08020"/><circle cx="13" cy="4" r="1.8" fill="#fff"/></svg>
<div style="left:520px;top:129px;width:1px;height:19px;background:#a0a0a0"></div>
<div style="left:521px;top:129px;width:1px;height:19px;background:#ffffff"></div>
<svg style="position:absolute;left:525px;top:130px" width="18" height="18" viewBox="0 0 18 18"><rect x="1.5" y="4.5" width="15" height="12" fill="#f0f8f0" stroke="#707070"/><text x="2" y="15" font-size="8" font-family="Liberation Sans" fill="#303030" textLength="13">%</text><rect x="9.5" y="0.5" width="7" height="7" fill="#f08020"/><circle cx="13" cy="4" r="1.8" fill="#fff"/></svg>
<svg style="position:absolute;left:548px;top:130px" width="18" height="18" viewBox="0 0 18 18"><rect x="1.5" y="4.5" width="15" height="12" fill="#f0f8f0" stroke="#707070"/><text x="2" y="15" font-size="8" font-family="Liberation Sans" fill="#303030" textLength="13">M29</text><rect x="9.5" y="0.5" width="7" height="7" fill="#f08020"/><circle cx="13" cy="4" r="1.8" fill="#fff"/></svg>
<svg style="position:absolute;left:571px;top:130px" width="18" height="18" viewBox="0 0 18 18"><rect x="1.5" y="4.5" width="15" height="12" fill="#f0f8f0" stroke="#707070"/><text x="2" y="15" font-size="8" font-family="Liberation Sans" fill="#303030" textLength="13">PP</text><rect x="9.5" y="0.5" width="7" height="7" fill="#f08020"/><circle cx="13" cy="4" r="1.8" fill="#fff"/></svg>
<svg style="position:absolute;left:594px;top:130px" width="18" height="18" viewBox="0 0 18 18"><rect x="1.5" y="4.5" width="15" height="12" fill="#f0f8f0" stroke="#707070"/><text x="2" y="15" font-size="8" font-family="Liberation Sans" fill="#303030" textLength="13">Ф3</text><rect x="9.5" y="0.5" width="7" height="7" fill="#f08020"/><circle cx="13" cy="4" r="1.8" fill="#fff"/></svg>
<div style="left:618px;top:129px;width:1px;height:19px;background:#a0a0a0"></div>
<div style="left:619px;top:129px;width:1px;height:19px;background:#ffffff"></div>
<svg style="position:absolute;left:623px;top:130px" width="18" height="18" viewBox="0 0 18 18"><path d="M0.5 3.5 H6 L7 5 H16.5 V16.5 H0.5 Z" fill="#a8a8a8" stroke="#909090"/><rect x="10.5" y="-0.5" width="7" height="7" fill="#a0a0a0"/><circle cx="14" cy="3" r="1.8" fill="#fff"/></svg>
<div style="left:647px;top:129px;width:1px;height:19px;background:#a0a0a0"></div>
<div style="left:648px;top:129px;width:1px;height:19px;background:#ffffff"></div>
<svg style="position:absolute;left:652px;top:130px" width="18" height="18" viewBox="0 0 18 18"><path d="M3 3 L14 14 M14 3 L3 14" stroke="#f04020" stroke-width="2"/></svg>
<div style="left:1px;top:153px;width:66px;height:21px;box-sizing:border-box;border-top:1px solid #fff;border-left:1px solid #fff;border-right:2px solid #696969;background:#f0f0f0;border-top-left-radius:2px"></div>
<div class="t" style="left:8px;top:157px;font-size:11px;color:#000;">Структура</div>
<div style="left:67px;top:173px;width:497px;height:1px;background:#ffffff"></div>
<div style="left:1px;top:173px;width:1px;height:835px;background:#ffffff"></div>
<div style="left:1px;top:1006px;width:563px;height:1px;background:#a0a0a0"></div>
<div style="left:1px;top:1007px;width:563px;height:1px;background:#696969"></div>
<div style="left:562px;top:173px;width:1px;height:835px;background:#a0a0a0"></div>
<div style="left:563px;top:172px;width:1px;height:836px;background:#696969"></div>
<div style="left:4px;top:176px;width:555px;height:1px;background:#a0a0a0"></div>
<div style="left:4px;top:176px;width:1px;height:827px;background:#a0a0a0"></div>
<div style="left:5px;top:177px;width:553px;height:1px;background:#696969"></div>
<div style="left:5px;top:177px;width:1px;height:825px;background:#696969"></div>
<div style="left:4px;top:1002px;width:556px;height:1px;background:#ffffff"></div>
<div style="left:559px;top:176px;width:1px;height:827px;background:#ffffff"></div>
<div style="left:5px;top:1001px;width:554px;height:1px;background:#e3e3e3"></div>
<div style="left:558px;top:177px;width:1px;height:825px;background:#e3e3e3"></div>
<div style="left:6px;top:178px;width:536px;height:807px;background:#fff;overflow:hidden">
<div style="left:8px;top:0px;width:1px;height:807px;background:repeating-linear-gradient(180deg,#a0a0a0 0 1px,transparent 1px 2px)"></div>
<div style="left:27px;top:0px;width:1px;height:807px;background:repeating-linear-gradient(180deg,#a0a0a0 0 1px,transparent 1px 2px)"></div>
<div style="left:46px;top:284px;width:1px;height:221px;background:repeating-linear-gradient(180deg,#a0a0a0 0 1px,transparent 1px 2px)"></div>
<div style="left:65px;top:300px;width:1px;height:125px;background:repeating-linear-gradient(180deg,#a0a0a0 0 1px,transparent 1px 2px)"></div>
<div style="left:84px;top:332px;width:1px;height:29px;background:repeating-linear-gradient(180deg,#a0a0a0 0 1px,transparent 1px 2px)"></div>
<div style="left:27px;top:8px;width:11px;height:1px;background:repeating-linear-gradient(90deg,#a0a0a0 0 1px,transparent 1px 2px)"></div>

<svg style="position:absolute;left:23px;top:4px" width="9" height="9" viewBox="0 0 9 9"><rect x="0.5" y="0.5" width="8" height="8" fill="#fff" stroke="#747474"/><rect x="2" y="4" width="5" height="1" fill="#000"/><rect x="4" y="2" width="1" height="5" fill="#000"/></svg>
<svg style="position:absolute;left:38px;top:1px" width="16" height="15" viewBox="0 0 16 15"><defs><linearGradient id="fy" x1="0" y1="1" x2="1" y2="0"><stop offset="0" stop-color="#ffff00"/><stop offset="0.45" stop-color="#ffd800"/><stop offset="1" stop-color="#ff7a00"/></linearGradient></defs>
<path d="M1.5 0.5 H7.5 L8.5 2.5 H1.5 Z" fill="#ffc830" stroke="#c0b090" stroke-width="1"/>
<rect x="0.5" y="2.5" width="15" height="11" fill="url(#fy)" stroke="#a8a8c0"/></svg>
<div class="t" style="left:59px;top:3px;font-size:11px;white-space:pre">10-15-12-ТИ. Билибинская АЭС. Тепловая изоляция оборудования и трубопроводов  <span style="color:#0000ff">[1]</span></div>
<div style="left:27px;top:24px;width:11px;height:1px;background:repeating-linear-gradient(90deg,#a0a0a0 0 1px,transparent 1px 2px)"></div>

<svg style="position:absolute;left:23px;top:20px" width="9" height="9" viewBox="0 0 9 9"><rect x="0.5" y="0.5" width="8" height="8" fill="#fff" stroke="#747474"/><rect x="2" y="4" width="5" height="1" fill="#000"/><rect x="4" y="2" width="1" height="5" fill="#000"/></svg>
<svg style="position:absolute;left:38px;top:17px" width="16" height="15" viewBox="0 0 16 15"><defs><linearGradient id="fy" x1="0" y1="1" x2="1" y2="0"><stop offset="0" stop-color="#ffff00"/><stop offset="0.45" stop-color="#ffd800"/><stop offset="1" stop-color="#ff7a00"/></linearGradient></defs>
<path d="M1.5 0.5 H7.5 L8.5 2.5 H1.5 Z" fill="#ffc830" stroke="#c0b090" stroke-width="1"/>
<rect x="0.5" y="2.5" width="15" height="11" fill="url(#fy)" stroke="#a8a8c0"/></svg>
<div class="t" style="left:59px;top:19px;font-size:11px;white-space:pre">10-16-11 Курская АЭС. Модернизация систем вентиляции  <span style="color:#0000ff">[10]</span></div>
<div style="left:27px;top:40px;width:11px;height:1px;background:repeating-linear-gradient(90deg,#a0a0a0 0 1px,transparent 1px 2px)"></div>

<svg style="position:absolute;left:23px;top:36px" width="9" height="9" viewBox="0 0 9 9"><rect x="0.5" y="0.5" width="8" height="8" fill="#fff" stroke="#747474"/><rect x="2" y="4" width="5" height="1" fill="#000"/><rect x="4" y="2" width="1" height="5" fill="#000"/></svg>
<svg style="position:absolute;left:38px;top:33px" width="16" height="15" viewBox="0 0 16 15"><defs><linearGradient id="fy" x1="0" y1="1" x2="1" y2="0"><stop offset="0" stop-color="#ffff00"/><stop offset="0.45" stop-color="#ffd800"/><stop offset="1" stop-color="#ff7a00"/></linearGradient></defs>
<path d="M1.5 0.5 H7.5 L8.5 2.5 H1.5 Z" fill="#ffc830" stroke="#c0b090" stroke-width="1"/>
<rect x="0.5" y="2.5" width="15" height="11" fill="url(#fy)" stroke="#a8a8c0"/></svg>
<div class="t" style="left:59px;top:35px;font-size:11px;white-space:pre">12-09-062-000- Тепловые завесы  <span style="color:#0000ff">[1]</span></div>
<div style="left:27px;top:56px;width:11px;height:1px;background:repeating-linear-gradient(90deg,#a0a0a0 0 1px,transparent 1px 2px)"></div>

<svg style="position:absolute;left:23px;top:52px" width="9" height="9" viewBox="0 0 9 9"><rect x="0.5" y="0.5" width="8" height="8" fill="#fff" stroke="#747474"/><rect x="2" y="4" width="5" height="1" fill="#000"/><rect x="4" y="2" width="1" height="5" fill="#000"/></svg>
<svg style="position:absolute;left:38px;top:49px" width="16" height="15" viewBox="0 0 16 15"><defs><linearGradient id="fy" x1="0" y1="1" x2="1" y2="0"><stop offset="0" stop-color="#ffff00"/><stop offset="0.45" stop-color="#ffd800"/><stop offset="1" stop-color="#ff7a00"/></linearGradient></defs>
<path d="M1.5 0.5 H7.5 L8.5 2.5 H1.5 Z" fill="#ffc830" stroke="#c0b090" stroke-width="1"/>
<rect x="0.5" y="2.5" width="15" height="11" fill="url(#fy)" stroke="#a8a8c0"/></svg>
<div class="t" style="left:59px;top:51px;font-size:11px;white-space:pre">Аккую. Здание ЦСБ  <span style="color:#0000ff">[7]</span></div>
<div style="left:27px;top:72px;width:11px;height:1px;background:repeating-linear-gradient(90deg,#a0a0a0 0 1px,transparent 1px 2px)"></div>

<svg style="position:absolute;left:23px;top:68px" width="9" height="9" viewBox="0 0 9 9"><rect x="0.5" y="0.5" width="8" height="8" fill="#fff" stroke="#747474"/><rect x="2" y="4" width="5" height="1" fill="#000"/><rect x="4" y="2" width="1" height="5" fill="#000"/></svg>
<svg style="position:absolute;left:38px;top:65px" width="16" height="15" viewBox="0 0 16 15"><defs><linearGradient id="fy" x1="0" y1="1" x2="1" y2="0"><stop offset="0" stop-color="#ffff00"/><stop offset="0.45" stop-color="#ffd800"/><stop offset="1" stop-color="#ff7a00"/></linearGradient></defs>
<path d="M1.5 0.5 H7.5 L8.5 2.5 H1.5 Z" fill="#ffc830" stroke="#c0b090" stroke-width="1"/>
<rect x="0.5" y="2.5" width="15" height="11" fill="url(#fy)" stroke="#a8a8c0"/></svg>
<div class="t" style="left:59px;top:67px;font-size:11px;white-space:pre">АЭС "Аккую". ПОДЪЕЗДНЫЕ ДОРОГИ  <span style="color:#0000ff">[15]</span></div>
<div style="left:27px;top:88px;width:11px;height:1px;background:repeating-linear-gradient(90deg,#a0a0a0 0 1px,transparent 1px 2px)"></div>

<svg style="position:absolute;left:23px;top:84px" width="9" height="9" viewBox="0 0 9 9"><rect x="0.5" y="0.5" width="8" height="8" fill="#fff" stroke="#747474"/><rect x="2" y="4" width="5" height="1" fill="#000"/><rect x="4" y="2" width="1" height="5" fill="#000"/></svg>
<svg style="position:absolute;left:38px;top:81px" width="16" height="15" viewBox="0 0 16 15"><defs><linearGradient id="fy" x1="0" y1="1" x2="1" y2="0"><stop offset="0" stop-color="#ffff00"/><stop offset="0.45" stop-color="#ffd800"/><stop offset="1" stop-color="#ff7a00"/></linearGradient></defs>
<path d="M1.5 0.5 H7.5 L8.5 2.5 H1.5 Z" fill="#ffc830" stroke="#c0b090" stroke-width="1"/>
<rect x="0.5" y="2.5" width="15" height="11" fill="url(#fy)" stroke="#a8a8c0"/></svg>
<div class="t" style="left:59px;top:83px;font-size:11px;white-space:pre">АЭС "Аккую". Энергоблоки 1, 2, 3, 4  <span style="color:#0000ff">[11]</span></div>
<div style="left:27px;top:104px;width:11px;height:1px;background:repeating-linear-gradient(90deg,#a0a0a0 0 1px,transparent 1px 2px)"></div>

<svg style="position:absolute;left:23px;top:100px" width="9" height="9" viewBox="0 0 9 9"><rect x="0.5" y="0.5" width="8" height="8" fill="#fff" stroke="#747474"/><rect x="2" y="4" width="5" height="1" fill="#000"/><rect x="4" y="2" width="1" height="5" fill="#000"/></svg>
<svg style="position:absolute;left:38px;top:97px" width="16" height="15" viewBox="0 0 16 15"><defs><linearGradient id="fy" x1="0" y1="1" x2="1" y2="0"><stop offset="0" stop-color="#ffff00"/><stop offset="0.45" stop-color="#ffd800"/><stop offset="1" stop-color="#ff7a00"/></linearGradient></defs>
<path d="M1.5 0.5 H7.5 L8.5 2.5 H1.5 Z" fill="#ffc830" stroke="#c0b090" stroke-width="1"/>
<rect x="0.5" y="2.5" width="15" height="11" fill="url(#fy)" stroke="#a8a8c0"/></svg>
<div class="t" style="left:59px;top:99px;font-size:11px;white-space:pre">база  <span style="color:#0000ff">[65]</span></div>
<div style="left:27px;top:120px;width:11px;height:1px;background:repeating-linear-gradient(90deg,#a0a0a0 0 1px,transparent 1px 2px)"></div>

<svg style="position:absolute;left:23px;top:116px" width="9" height="9" viewBox="0 0 9 9"><rect x="0.5" y="0.5" width="8" height="8" fill="#fff" stroke="#747474"/><rect x="2" y="4" width="5" height="1" fill="#000"/><rect x="4" y="2" width="1" height="5" fill="#000"/></svg>
<svg style="position:absolute;left:38px;top:113px" width="16" height="15" viewBox="0 0 16 15"><defs><linearGradient id="fy" x1="0" y1="1" x2="1" y2="0"><stop offset="0" stop-color="#ffff00"/><stop offset="0.45" stop-color="#ffd800"/><stop offset="1" stop-color="#ff7a00"/></linearGradient></defs>
<path d="M1.5 0.5 H7.5 L8.5 2.5 H1.5 Z" fill="#ffc830" stroke="#c0b090" stroke-width="1"/>
<rect x="0.5" y="2.5" width="15" height="11" fill="url(#fy)" stroke="#a8a8c0"/></svg>
<div class="t" style="left:59px;top:115px;font-size:11px;white-space:pre">база_изм.1  <span style="color:#0000ff">[65]</span></div>
<div style="left:27px;top:136px;width:11px;height:1px;background:repeating-linear-gradient(90deg,#a0a0a0 0 1px,transparent 1px 2px)"></div>

<svg style="position:absolute;left:23px;top:132px" width="9" height="9" viewBox="0 0 9 9"><rect x="0.5" y="0.5" width="8" height="8" fill="#fff" stroke="#747474"/><rect x="2" y="4" width="5" height="1" fill="#000"/><rect x="4" y="2" width="1" height="5" fill="#000"/></svg>
<svg style="position:absolute;left:38px;top:129px" width="16" height="15" viewBox="0 0 16 15"><defs><linearGradient id="fy" x1="0" y1="1" x2="1" y2="0"><stop offset="0" stop-color="#ffff00"/><stop offset="0.45" stop-color="#ffd800"/><stop offset="1" stop-color="#ff7a00"/></linearGradient></defs>
<path d="M1.5 0.5 H7.5 L8.5 2.5 H1.5 Z" fill="#ffc830" stroke="#c0b090" stroke-width="1"/>
<rect x="0.5" y="2.5" width="15" height="11" fill="url(#fy)" stroke="#a8a8c0"/></svg>
<div class="t" style="left:59px;top:131px;font-size:11px;white-space:pre">база_изм.2  <span style="color:#0000ff">[65]</span></div>
<div style="left:27px;top:152px;width:11px;height:1px;background:repeating-linear-gradient(90deg,#a0a0a0 0 1px,transparent 1px 2px)"></div>

<svg style="position:absolute;left:23px;top:148px" width="9" height="9" viewBox="0 0 9 9"><rect x="0.5" y="0.5" width="8" height="8" fill="#fff" stroke="#747474"/><rect x="2" y="4" width="5" height="1" fill="#000"/><rect x="4" y="2" width="1" height="5" fill="#000"/></svg>
<svg style="position:absolute;left:38px;top:145px" width="16" height="15" viewBox="0 0 16 15"><defs><linearGradient id="fy" x1="0" y1="1" x2="1" y2="0"><stop offset="0" stop-color="#ffff00"/><stop offset="0.45" stop-color="#ffd800"/><stop offset="1" stop-color="#ff7a00"/></linearGradient></defs>
<path d="M1.5 0.5 H7.5 L8.5 2.5 H1.5 Z" fill="#ffc830" stroke="#c0b090" stroke-width="1"/>
<rect x="0.5" y="2.5" width="15" height="11" fill="url(#fy)" stroke="#a8a8c0"/></svg>
<div class="t" style="left:59px;top:147px;font-size:11px;white-space:pre">БСТИ  <span style="color:#0000ff">[3]</span></div>
<div style="left:27px;top:168px;width:11px;height:1px;background:repeating-linear-gradient(90deg,#a0a0a0 0 1px,transparent 1px 2px)"></div>

<svg style="position:absolute;left:23px;top:164px" width="9" height="9" viewBox="0 0 9 9"><rect x="0.5" y="0.5" width="8" height="8" fill="#fff" stroke="#747474"/><rect x="2" y="4" width="5" height="1" fill="#000"/><rect x="4" y="2" width="1" height="5" fill="#000"/></svg>
<svg style="position:absolute;left:38px;top:161px" width="16" height="15" viewBox="0 0 16 15"><defs><linearGradient id="fy" x1="0" y1="1" x2="1" y2="0"><stop offset="0" stop-color="#ffff00"/><stop offset="0.45" stop-color="#ffd800"/><stop offset="1" stop-color="#ff7a00"/></linearGradient></defs>
<path d="M1.5 0.5 H7.5 L8.5 2.5 H1.5 Z" fill="#ffc830" stroke="#c0b090" stroke-width="1"/>
<rect x="0.5" y="2.5" width="15" height="11" fill="url(#fy)" stroke="#a8a8c0"/></svg>
<div class="t" style="left:59px;top:163px;font-size:11px;white-space:pre">Дороги 7МКР  <span style="color:#0000ff">[1]</span></div>
<div style="left:27px;top:184px;width:11px;height:1px;background:repeating-linear-gradient(90deg,#a0a0a0 0 1px,transparent 1px 2px)"></div>

<svg style="position:absolute;left:23px;top:180px" width="9" height="9" viewBox="0 0 9 9"><rect x="0.5" y="0.5" width="8" height="8" fill="#fff" stroke="#747474"/><rect x="2" y="4" width="5" height="1" fill="#000"/><rect x="4" y="2" width="1" height="5" fill="#000"/></svg>
<svg style="position:absolute;left:38px;top:177px" width="16" height="15" viewBox="0 0 16 15"><defs><linearGradient id="fy" x1="0" y1="1" x2="1" y2="0"><stop offset="0" stop-color="#ffff00"/><stop offset="0.45" stop-color="#ffd800"/><stop offset="1" stop-color="#ff7a00"/></linearGradient></defs>
<path d="M1.5 0.5 H7.5 L8.5 2.5 H1.5 Z" fill="#ffc830" stroke="#c0b090" stroke-width="1"/>
<rect x="0.5" y="2.5" width="15" height="11" fill="url(#fy)" stroke="#a8a8c0"/></svg>
<div class="t" style="left:59px;top:179px;font-size:11px;white-space:pre">ИБК  <span style="color:#0000ff">[81]</span></div>
<div style="left:27px;top:200px;width:11px;height:1px;background:repeating-linear-gradient(90deg,#a0a0a0 0 1px,transparent 1px 2px)"></div>

<svg style="position:absolute;left:23px;top:196px" width="9" height="9" viewBox="0 0 9 9"><rect x="0.5" y="0.5" width="8" height="8" fill="#fff" stroke="#747474"/><rect x="2" y="4" width="5" height="1" fill="#000"/><rect x="4" y="2" width="1" height="5" fill="#000"/></svg>
<svg style="position:absolute;left:38px;top:193px" width="16" height="15" viewBox="0 0 16 15"><defs><linearGradient id="fy" x1="0" y1="1" x2="1" y2="0"><stop offset="0" stop-color="#ffff00"/><stop offset="0.45" stop-color="#ffd800"/><stop offset="1" stop-color="#ff7a00"/></linearGradient></defs>
<path d="M1.5 0.5 H7.5 L8.5 2.5 H1.5 Z" fill="#ffc830" stroke="#c0b090" stroke-width="1"/>
<rect x="0.5" y="2.5" width="15" height="11" fill="url(#fy)" stroke="#a8a8c0"/></svg>
<div class="t" style="left:59px;top:195px;font-size:11px;white-space:pre">----ИСКЛ_01-03-153-Источники бесперебойного питания изм. 4  <span style="color:#0000ff">[12]</span></div>
<div style="left:27px;top:216px;width:11px;height:1px;background:repeating-linear-gradient(90deg,#a0a0a0 0 1px,transparent 1px 2px)"></div>

<svg style="position:absolute;left:23px;top:212px" width="9" height="9" viewBox="0 0 9 9"><rect x="0.5" y="0.5" width="8" height="8" fill="#fff" stroke="#747474"/><rect x="2" y="4" width="5" height="1" fill="#000"/><rect x="4" y="2" width="1" height="5" fill="#000"/></svg>
<svg style="position:absolute;left:38px;top:209px" width="16" height="15" viewBox="0 0 16 15"><defs><linearGradient id="fy" x1="0" y1="1" x2="1" y2="0"><stop offset="0" stop-color="#ffff00"/><stop offset="0.45" stop-color="#ffd800"/><stop offset="1" stop-color="#ff7a00"/></linearGradient></defs>
<path d="M1.5 0.5 H7.5 L8.5 2.5 H1.5 Z" fill="#ffc830" stroke="#c0b090" stroke-width="1"/>
<rect x="0.5" y="2.5" width="15" height="11" fill="url(#fy)" stroke="#a8a8c0"/></svg>
<div class="t" style="left:59px;top:211px;font-size:11px;white-space:pre">КИТСФ3  <span style="color:#0000ff">[38]</span></div>
<div style="left:27px;top:232px;width:11px;height:1px;background:repeating-linear-gradient(90deg,#a0a0a0 0 1px,transparent 1px 2px)"></div>

<svg style="position:absolute;left:23px;top:228px" width="9" height="9" viewBox="0 0 9 9"><rect x="0.5" y="0.5" width="8" height="8" fill="#fff" stroke="#747474"/><rect x="2" y="4" width="5" height="1" fill="#000"/><rect x="4" y="2" width="1" height="5" fill="#000"/></svg>
<svg style="position:absolute;left:38px;top:225px" width="16" height="15" viewBox="0 0 16 15"><defs><linearGradient id="fy" x1="0" y1="1" x2="1" y2="0"><stop offset="0" stop-color="#ffff00"/><stop offset="0.45" stop-color="#ffd800"/><stop offset="1" stop-color="#ff7a00"/></linearGradient></defs>
<path d="M1.5 0.5 H7.5 L8.5 2.5 H1.5 Z" fill="#ffc830" stroke="#c0b090" stroke-width="1"/>
<rect x="0.5" y="2.5" width="15" height="11" fill="url(#fy)" stroke="#a8a8c0"/></svg>
<div class="t" style="left:59px;top:227px;font-size:11px;white-space:pre">КИТСФ3_Рабочка  <span style="color:#0000ff">[6]</span></div>
<div style="left:27px;top:248px;width:11px;height:1px;background:repeating-linear-gradient(90deg,#a0a0a0 0 1px,transparent 1px 2px)"></div>

<svg style="position:absolute;left:23px;top:244px" width="9" height="9" viewBox="0 0 9 9"><rect x="0.5" y="0.5" width="8" height="8" fill="#fff" stroke="#747474"/><rect x="2" y="4" width="5" height="1" fill="#000"/><rect x="4" y="2" width="1" height="5" fill="#000"/></svg>
<svg style="position:absolute;left:38px;top:241px" width="16" height="15" viewBox="0 0 16 15"><defs><linearGradient id="fy" x1="0" y1="1" x2="1" y2="0"><stop offset="0" stop-color="#ffff00"/><stop offset="0.45" stop-color="#ffd800"/><stop offset="1" stop-color="#ff7a00"/></linearGradient></defs>
<path d="M1.5 0.5 H7.5 L8.5 2.5 H1.5 Z" fill="#ffc830" stroke="#c0b090" stroke-width="1"/>
<rect x="0.5" y="2.5" width="15" height="11" fill="url(#fy)" stroke="#a8a8c0"/></svg>
<div class="t" style="left:59px;top:243px;font-size:11px;white-space:pre">КУРСКАЯ АЭС (НЕ НАШИ СМЕТЫ)  <span style="color:#0000ff">[2]</span></div>
<div style="left:27px;top:264px;width:11px;height:1px;background:repeating-linear-gradient(90deg,#a0a0a0 0 1px,transparent 1px 2px)"></div>

<svg style="position:absolute;left:23px;top:260px" width="9" height="9" viewBox="0 0 9 9"><rect x="0.5" y="0.5" width="8" height="8" fill="#fff" stroke="#747474"/><rect x="2" y="4" width="5" height="1" fill="#000"/><rect x="4" y="2" width="1" height="5" fill="#000"/></svg>
<svg style="position:absolute;left:38px;top:257px" width="16" height="15" viewBox="0 0 16 15"><defs><linearGradient id="fy" x1="0" y1="1" x2="1" y2="0"><stop offset="0" stop-color="#ffff00"/><stop offset="0.45" stop-color="#ffd800"/><stop offset="1" stop-color="#ff7a00"/></linearGradient></defs>
<path d="M1.5 0.5 H7.5 L8.5 2.5 H1.5 Z" fill="#ffc830" stroke="#c0b090" stroke-width="1"/>
<rect x="0.5" y="2.5" width="15" height="11" fill="url(#fy)" stroke="#a8a8c0"/></svg>
<div class="t" style="left:59px;top:259px;font-size:11px;white-space:pre">КУРСКАЯ АЭС КП РАО  <span style="color:#0000ff">[23]</span></div>
<div style="left:27px;top:280px;width:11px;height:1px;background:repeating-linear-gradient(90deg,#a0a0a0 0 1px,transparent 1px 2px)"></div>

<svg style="position:absolute;left:23px;top:276px" width="9" height="9" viewBox="0 0 9 9"><rect x="0.5" y="0.5" width="8" height="8" fill="#fff" stroke="#747474"/><rect x="2" y="4" width="5" height="1" fill="#000"/></svg>
<svg style="position:absolute;left:38px;top:273px" width="16" height="15" viewBox="0 0 16 15"><defs><linearGradient id="fy" x1="0" y1="1" x2="1" y2="0"><stop offset="0" stop-color="#ffff00"/><stop offset="0.45" stop-color="#ffd800"/><stop offset="1" stop-color="#ff7a00"/></linearGradient></defs>
<path d="M1.5 0.5 H7.5 L8.5 2.5 H1.5 Z" fill="#ffc830" stroke="#c0b090" stroke-width="1"/>
<rect x="0.5" y="2.5" width="15" height="11" fill="url(#fy)" stroke="#a8a8c0"/></svg>
<div class="t" style="left:59px;top:275px;font-size:11px;white-space:pre">КУРСКАЯ АЭС КП РАО_ИЗМ.1  <span style="color:#0000ff">[6]</span></div>
<div style="left:46px;top:296px;width:11px;height:1px;background:repeating-linear-gradient(90deg,#a0a0a0 0 1px,transparent 1px 2px)"></div>

<svg style="position:absolute;left:42px;top:292px" width="9" height="9" viewBox="0 0 9 9"><rect x="0.5" y="0.5" width="8" height="8" fill="#fff" stroke="#747474"/><rect x="2" y="4" width="5" height="1" fill="#000"/></svg>
<svg style="position:absolute;left:57px;top:288px" width="16" height="16" viewBox="0 0 16 16"><rect x="2.5" y="1.5" width="2" height="4.5" fill="#f0a828" stroke="#c07020" stroke-width="0.8"/>
<path d="M1.5 8 V15 H14.5 V8 L8 1.8 Z" fill="#ffffff" stroke="#909090" stroke-width="0.9"/>
<path d="M0.5 9 L8 1.5 L15.5 9" fill="none" stroke="#c87020" stroke-width="1.3"/>
<rect x="11" y="4" width="3" height="3" fill="#f0a828" opacity="0.8"/>
<path d="M0 15.5 H16" stroke="#707070" stroke-width="1"/>
<rect x="3.5" y="9.5" width="2.5" height="5.5" fill="#f8c040" stroke="#a05030" stroke-width="0.7"/>
<rect x="8.5" y="9" width="2.5" height="3" fill="#4a90f0"/></svg>
<div class="t" style="left:78px;top:291px;font-size:11px">Автоматизация</div>
<div style="left:65px;top:312px;width:11px;height:1px;background:repeating-linear-gradient(90deg,#a0a0a0 0 1px,transparent 1px 2px)"></div>

<svg style="position:absolute;left:61px;top:308px" width="9" height="9" viewBox="0 0 9 9"><rect x="0.5" y="0.5" width="8" height="8" fill="#fff" stroke="#747474"/><rect x="2" y="4" width="5" height="1" fill="#000"/><rect x="4" y="2" width="1" height="5" fill="#000"/></svg>
<svg style="position:absolute;left:76px;top:305px" width="16" height="15" viewBox="0 0 16 15"><defs><linearGradient id="fb" x1="0" y1="1" x2="1" y2="0"><stop offset="0" stop-color="#80e8ff"/><stop offset="0.5" stop-color="#30b8f0"/><stop offset="1" stop-color="#0070d8"/></linearGradient></defs>
<path d="M1.5 0.5 H7.5 L8.5 2.5 H1.5 Z" fill="#60b0e8" stroke="#7090b0" stroke-width="1"/>
<rect x="0.5" y="2.5" width="15" height="11" fill="url(#fb)" stroke="#a09890"/></svg>
<div class="t" style="left:97px;top:307px;font-size:11px">СТРУКТУРА</div>
<div style="left:65px;top:328px;width:11px;height:1px;background:repeating-linear-gradient(90deg,#a0a0a0 0 1px,transparent 1px 2px)"></div>

<svg style="position:absolute;left:61px;top:324px" width="9" height="9" viewBox="0 0 9 9"><rect x="0.5" y="0.5" width="8" height="8" fill="#fff" stroke="#747474"/><rect x="2" y="4" width="5" height="1" fill="#000"/></svg>
<svg style="position:absolute;left:76px;top:321px" width="16" height="15" viewBox="0 0 16 15"><defs><linearGradient id="fb" x1="0" y1="1" x2="1" y2="0"><stop offset="0" stop-color="#80e8ff"/><stop offset="0.5" stop-color="#30b8f0"/><stop offset="1" stop-color="#0070d8"/></linearGradient></defs>
<path d="M1.5 0.5 H7.5 L8.5 2.5 H1.5 Z" fill="#60b0e8" stroke="#7090b0" stroke-width="1"/>
<rect x="0.5" y="2.5" width="15" height="11" fill="url(#fb)" stroke="#a09890"/></svg>
<div class="t" style="left:97px;top:323px;font-size:11px">СМЕТЫ</div>
<div style="left:84px;top:344px;width:11px;height:1px;background:repeating-linear-gradient(90deg,#a0a0a0 0 1px,transparent 1px 2px)"></div>
<svg style="position:absolute;left:95px;top:336px" width="16" height="17" viewBox="0 0 16 17"><defs><linearGradient id="smg" x1="0" y1="0" x2="1" y2="1"><stop offset="0" stop-color="#ffff00"/><stop offset="0.6" stop-color="#30e020"/><stop offset="1" stop-color="#20d020"/></linearGradient></defs>
<rect x="3.5" y="1.5" width="9" height="8.5" fill="url(#smg)" stroke="#808080"/>
<rect x="1.5" y="5.5" width="3" height="10" fill="#fff890" stroke="#808080"/>
<rect x="4.5" y="9" width="2" height="6.5" fill="#20c040"/>
<rect x="6.5" y="9.5" width="8.5" height="6" fill="#b8ff80" stroke="#808080"/>
<g fill="#1080f0"><circle cx="5.8" cy="3" r="0.8"/><circle cx="8" cy="3" r="0.8"/><circle cx="5.8" cy="5" r="0.8"/><circle cx="8" cy="5" r="0.8"/><circle cx="5.8" cy="7" r="0.8"/><circle cx="8" cy="7" r="0.8"/><circle cx="5.5" cy="10.5" r="0.7"/><circle cx="5.5" cy="12.5" r="0.7"/><circle cx="8.8" cy="11.5" r="0.8"/><circle cx="12.8" cy="11.5" r="0.8"/><circle cx="8.8" cy="13.5" r="0.8"/><circle cx="12.8" cy="13.5" r="0.8"/></g>
<g fill="#ffffff"><circle cx="10.5" cy="3" r="0.8"/><circle cx="10.5" cy="5" r="0.8"/><circle cx="10.5" cy="7" r="0.8"/></g></svg>
<div style="left:114px;top:336px;width:59px;height:16px;background:#ececec"></div>
<div class="t" style="left:116px;top:339px;font-size:11px">Проектная</div>
<div style="left:84px;top:360px;width:11px;height:1px;background:repeating-linear-gradient(90deg,#a0a0a0 0 1px,transparent 1px 2px)"></div>
<svg style="position:absolute;left:95px;top:352px" width="16" height="17" viewBox="0 0 16 17"><rect x="3.5" y="1.5" width="2" height="3.5" fill="#fff060" stroke="#808080" stroke-width="0.8"/>
<rect x="1.5" y="5.5" width="3" height="10" fill="#fff890" stroke="#808080"/>
<circle cx="8" cy="3" r="1.5" fill="none" stroke="#303030" stroke-width="0.9"/><circle cx="13" cy="8" r="1.5" fill="none" stroke="#303030" stroke-width="0.9"/>
<path d="M7 10 L14 2.5" stroke="#303030" stroke-width="0.9"/>
<rect x="4.5" y="11.5" width="2" height="4" fill="#20c040"/>
<rect x="6.5" y="11.5" width="8.5" height="4" fill="#b8ff80" stroke="#808080"/>
<g fill="#1080f0"><circle cx="5.5" cy="12.5" r="0.7"/><circle cx="5.5" cy="14.5" r="0.7"/><circle cx="8.8" cy="12.8" r="0.8"/><circle cx="12.8" cy="12.8" r="0.8"/><circle cx="8.8" cy="14.5" r="0.7"/><circle cx="12.8" cy="14.5" r="0.7"/></g></svg>
<div class="t" style="left:116px;top:355px;font-size:11px">Исполнительная</div>
<div style="left:65px;top:376px;width:11px;height:1px;background:repeating-linear-gradient(90deg,#a0a0a0 0 1px,transparent 1px 2px)"></div>

<svg style="position:absolute;left:61px;top:372px" width="9" height="9" viewBox="0 0 9 9"><rect x="0.5" y="0.5" width="8" height="8" fill="#fff" stroke="#747474"/><rect x="2" y="4" width="5" height="1" fill="#000"/><rect x="4" y="2" width="1" height="5" fill="#000"/></svg>
<svg style="position:absolute;left:76px;top:369px" width="16" height="15" viewBox="0 0 16 15"><defs><linearGradient id="fb" x1="0" y1="1" x2="1" y2="0"><stop offset="0" stop-color="#80e8ff"/><stop offset="0.5" stop-color="#30b8f0"/><stop offset="1" stop-color="#0070d8"/></linearGradient></defs>
<path d="M1.5 0.5 H7.5 L8.5 2.5 H1.5 Z" fill="#60b0e8" stroke="#7090b0" stroke-width="1"/>
<rect x="0.5" y="2.5" width="15" height="11" fill="url(#fb)" stroke="#a09890"/></svg>
<div class="t" style="left:97px;top:371px;font-size:11px">ВЫПОЛНЕНИЯ</div>
<div style="left:65px;top:392px;width:11px;height:1px;background:repeating-linear-gradient(90deg,#a0a0a0 0 1px,transparent 1px 2px)"></div>
<svg style="position:absolute;left:76px;top:385px" width="16" height="15" viewBox="0 0 16 15"><defs><linearGradient id="fb" x1="0" y1="1" x2="1" y2="0"><stop offset="0" stop-color="#80e8ff"/><stop offset="0.5" stop-color="#30b8f0"/><stop offset="1" stop-color="#0070d8"/></linearGradient></defs>
<path d="M1.5 0.5 H7.5 L8.5 2.5 H1.5 Z" fill="#60b0e8" stroke="#7090b0" stroke-width="1"/>
<rect x="0.5" y="2.5" width="15" height="11" fill="url(#fb)" stroke="#a09890"/></svg>
<div class="t" style="left:97px;top:387px;font-size:11px">М-29</div>
<div style="left:65px;top:408px;width:11px;height:1px;background:repeating-linear-gradient(90deg,#a0a0a0 0 1px,transparent 1px 2px)"></div>
<svg style="position:absolute;left:76px;top:401px" width="16" height="15" viewBox="0 0 16 15"><defs><linearGradient id="fb" x1="0" y1="1" x2="1" y2="0"><stop offset="0" stop-color="#80e8ff"/><stop offset="0.5" stop-color="#30b8f0"/><stop offset="1" stop-color="#0070d8"/></linearGradient></defs>
<path d="M1.5 0.5 H7.5 L8.5 2.5 H1.5 Z" fill="#60b0e8" stroke="#7090b0" stroke-width="1"/>
<rect x="0.5" y="2.5" width="15" height="11" fill="url(#fb)" stroke="#a09890"/></svg>
<div class="t" style="left:97px;top:403px;font-size:11px">РЕСУРСНЫЕ РАСЧЕТЫ</div>
<div style="left:65px;top:424px;width:11px;height:1px;background:repeating-linear-gradient(90deg,#a0a0a0 0 1px,transparent 1px 2px)"></div>
<svg style="position:absolute;left:76px;top:417px" width="16" height="15" viewBox="0 0 16 15"><defs><linearGradient id="fb" x1="0" y1="1" x2="1" y2="0"><stop offset="0" stop-color="#80e8ff"/><stop offset="0.5" stop-color="#30b8f0"/><stop offset="1" stop-color="#0070d8"/></linearGradient></defs>
<path d="M1.5 0.5 H7.5 L8.5 2.5 H1.5 Z" fill="#60b0e8" stroke="#7090b0" stroke-width="1"/>
<rect x="0.5" y="2.5" width="15" height="11" fill="url(#fb)" stroke="#a09890"/></svg>
<div class="t" style="left:97px;top:419px;font-size:11px">КС-3</div>
<div style="left:46px;top:440px;width:11px;height:1px;background:repeating-linear-gradient(90deg,#a0a0a0 0 1px,transparent 1px 2px)"></div>

<svg style="position:absolute;left:42px;top:436px" width="9" height="9" viewBox="0 0 9 9"><rect x="0.5" y="0.5" width="8" height="8" fill="#fff" stroke="#747474"/><rect x="2" y="4" width="5" height="1" fill="#000"/><rect x="4" y="2" width="1" height="5" fill="#000"/></svg>
<svg style="position:absolute;left:57px;top:432px" width="16" height="16" viewBox="0 0 16 16"><rect x="2.5" y="1.5" width="2" height="4.5" fill="#f0a828" stroke="#c07020" stroke-width="0.8"/>
<path d="M1.5 8 V15 H14.5 V8 L8 1.8 Z" fill="#ffffff" stroke="#909090" stroke-width="0.9"/>
<path d="M0.5 9 L8 1.5 L15.5 9" fill="none" stroke="#c87020" stroke-width="1.3"/>
<rect x="11" y="4" width="3" height="3" fill="#f0a828" opacity="0.8"/>
<path d="M0 15.5 H16" stroke="#707070" stroke-width="1"/>
<rect x="3.5" y="9.5" width="2.5" height="5.5" fill="#f8c040" stroke="#a05030" stroke-width="0.7"/>
<rect x="8.5" y="9" width="2.5" height="3" fill="#4a90f0"/></svg>
<div class="t" style="left:78px;top:435px;font-size:11px">Архитектурные решения</div>
<div style="left:46px;top:456px;width:11px;height:1px;background:repeating-linear-gradient(90deg,#a0a0a0 0 1px,transparent 1px 2px)"></div>

<svg style="position:absolute;left:42px;top:452px" width="9" height="9" viewBox="0 0 9 9"><rect x="0.5" y="0.5" width="8" height="8" fill="#fff" stroke="#747474"/><rect x="2" y="4" width="5" height="1" fill="#000"/><rect x="4" y="2" width="1" height="5" fill="#000"/></svg>
<svg style="position:absolute;left:57px;top:448px" width="16" height="16" viewBox="0 0 16 16"><rect x="2.5" y="1.5" width="2" height="4.5" fill="#f0a828" stroke="#c07020" stroke-width="0.8"/>
<path d="M1.5 8 V15 H14.5 V8 L8 1.8 Z" fill="#ffffff" stroke="#909090" stroke-width="0.9"/>
<path d="M0.5 9 L8 1.5 L15.5 9" fill="none" stroke="#c87020" stroke-width="1.3"/>
<rect x="11" y="4" width="3" height="3" fill="#f0a828" opacity="0.8"/>
<path d="M0 15.5 H16" stroke="#707070" stroke-width="1"/>
<rect x="3.5" y="9.5" width="2.5" height="5.5" fill="#f8c040" stroke="#a05030" stroke-width="0.7"/>
<rect x="8.5" y="9" width="2.5" height="3" fill="#4a90f0"/></svg>
<div class="t" style="left:78px;top:451px;font-size:11px">Конструктивные и объемно-планировочные решения</div>
<div style="left:46px;top:472px;width:11px;height:1px;background:repeating-linear-gradient(90deg,#a0a0a0 0 1px,transparent 1px 2px)"></div>

<svg style="position:absolute;left:42px;top:468px" width="9" height="9" viewBox="0 0 9 9"><rect x="0.5" y="0.5" width="8" height="8" fill="#fff" stroke="#747474"/><rect x="2" y="4" width="5" height="1" fill="#000"/><rect x="4" y="2" width="1" height="5" fill="#000"/></svg>
<svg style="position:absolute;left:57px;top:464px" width="16" height="16" viewBox="0 0 16 16"><rect x="2.5" y="1.5" width="2" height="4.5" fill="#f0a828" stroke="#c07020" stroke-width="0.8"/>
<path d="M1.5 8 V15 H14.5 V8 L8 1.8 Z" fill="#ffffff" stroke="#909090" stroke-width="0.9"/>
<path d="M0.5 9 L8 1.5 L15.5 9" fill="none" stroke="#c87020" stroke-width="1.3"/>
<rect x="11" y="4" width="3" height="3" fill="#f0a828" opacity="0.8"/>
<path d="M0 15.5 H16" stroke="#707070" stroke-width="1"/>
<rect x="3.5" y="9.5" width="2.5" height="5.5" fill="#f8c040" stroke="#a05030" stroke-width="0.7"/>
<rect x="8.5" y="9" width="2.5" height="3" fill="#4a90f0"/></svg>
<div class="t" style="left:78px;top:467px;font-size:11px">Отопление, вентиляция и кондиционирование воздуха, тепловые сети</div>
<div style="left:46px;top:488px;width:11px;height:1px;background:repeating-linear-gradient(90deg,#a0a0a0 0 1px,transparent 1px 2px)"></div>

<svg style="position:absolute;left:42px;top:484px" width="9" height="9" viewBox="0 0 9 9"><rect x="0.5" y="0.5" width="8" height="8" fill="#fff" stroke="#747474"/><rect x="2" y="4" width="5" height="1" fill="#000"/><rect x="4" y="2" width="1" height="5" fill="#000"/></svg>
<svg style="position:absolute;left:57px;top:480px" width="16" height="16" viewBox="0 0 16 16"><rect x="2.5" y="1.5" width="2" height="4.5" fill="#f0a828" stroke="#c07020" stroke-width="0.8"/>
<path d="M1.5 8 V15 H14.5 V8 L8 1.8 Z" fill="#ffffff" stroke="#909090" stroke-width="0.9"/>
<path d="M0.5 9 L8 1.5 L15.5 9" fill="none" stroke="#c87020" stroke-width="1.3"/>
<rect x="11" y="4" width="3" height="3" fill="#f0a828" opacity="0.8"/>
<path d="M0 15.5 H16" stroke="#707070" stroke-width="1"/>
<rect x="3.5" y="9.5" width="2.5" height="5.5" fill="#f8c040" stroke="#a05030" stroke-width="0.7"/>
<rect x="8.5" y="9" width="2.5" height="3" fill="#4a90f0"/></svg>
<div class="t" style="left:78px;top:483px;font-size:11px">Система водоотведения и водоотведения</div>
<div style="left:46px;top:504px;width:11px;height:1px;background:repeating-linear-gradient(90deg,#a0a0a0 0 1px,transparent 1px 2px)"></div>

<svg style="position:absolute;left:42px;top:500px" width="9" height="9" viewBox="0 0 9 9"><rect x="0.5" y="0.5" width="8" height="8" fill="#fff" stroke="#747474"/><rect x="2" y="4" width="5" height="1" fill="#000"/><rect x="4" y="2" width="1" height="5" fill="#000"/></svg>
<svg style="position:absolute;left:57px;top:496px" width="16" height="16" viewBox="0 0 16 16"><rect x="2.5" y="1.5" width="2" height="4.5" fill="#f0a828" stroke="#c07020" stroke-width="0.8"/>
<path d="M1.5 8 V15 H14.5 V8 L8 1.8 Z" fill="#ffffff" stroke="#909090" stroke-width="0.9"/>
<path d="M0.5 9 L8 1.5 L15.5 9" fill="none" stroke="#c87020" stroke-width="1.3"/>
<rect x="11" y="4" width="3" height="3" fill="#f0a828" opacity="0.8"/>
<path d="M0 15.5 H16" stroke="#707070" stroke-width="1"/>
<rect x="3.5" y="9.5" width="2.5" height="5.5" fill="#f8c040" stroke="#a05030" stroke-width="0.7"/>
<rect x="8.5" y="9" width="2.5" height="3" fill="#4a90f0"/></svg>
<div class="t" style="left:78px;top:499px;font-size:11px">Система электроснабжения</div>
<div style="left:27px;top:520px;width:11px;height:1px;background:repeating-linear-gradient(90deg,#a0a0a0 0 1px,transparent 1px 2px)"></div>

<svg style="position:absolute;left:23px;top:516px" width="9" height="9" viewBox="0 0 9 9"><rect x="0.5" y="0.5" width="8" height="8" fill="#fff" stroke="#747474"/><rect x="2" y="4" width="5" height="1" fill="#000"/><rect x="4" y="2" width="1" height="5" fill="#000"/></svg>
<svg style="position:absolute;left:38px;top:513px" width="16" height="15" viewBox="0 0 16 15"><defs><linearGradient id="fy" x1="0" y1="1" x2="1" y2="0"><stop offset="0" stop-color="#ffff00"/><stop offset="0.45" stop-color="#ffd800"/><stop offset="1" stop-color="#ff7a00"/></linearGradient></defs>
<path d="M1.5 0.5 H7.5 L8.5 2.5 H1.5 Z" fill="#ffc830" stroke="#c0b090" stroke-width="1"/>
<rect x="0.5" y="2.5" width="15" height="11" fill="url(#fy)" stroke="#a8a8c0"/></svg>
<div class="t" style="left:59px;top:515px;font-size:11px;white-space:pre">Курская АЭС. 2,3,4 энергоблоки. помещения подготовки "свежего" топлива АУПС  <span style="color:#0000ff">[9]</span></div>
<div style="left:27px;top:536px;width:11px;height:1px;background:repeating-linear-gradient(90deg,#a0a0a0 0 1px,transparent 1px 2px)"></div>

<svg style="position:absolute;left:23px;top:532px" width="9" height="9" viewBox="0 0 9 9"><rect x="0.5" y="0.5" width="8" height="8" fill="#fff" stroke="#747474"/><rect x="2" y="4" width="5" height="1" fill="#000"/><rect x="4" y="2" width="1" height="5" fill="#000"/></svg>
<svg style="position:absolute;left:38px;top:529px" width="16" height="15" viewBox="0 0 16 15"><defs><linearGradient id="fy" x1="0" y1="1" x2="1" y2="0"><stop offset="0" stop-color="#ffff00"/><stop offset="0.45" stop-color="#ffd800"/><stop offset="1" stop-color="#ff7a00"/></linearGradient></defs>
<path d="M1.5 0.5 H7.5 L8.5 2.5 H1.5 Z" fill="#ffc830" stroke="#c0b090" stroke-width="1"/>
<rect x="0.5" y="2.5" width="15" height="11" fill="url(#fy)" stroke="#a8a8c0"/></svg>
<div class="t" style="left:59px;top:531px;font-size:11px;white-space:pre">Курская АЭС. 2,3,4 энергоблоки. помещения подготовки "свежего" топлива АУПС_ИЗМ.1  <span style="color:#0000ff">[9]</span></div>
<div style="left:27px;top:552px;width:11px;height:1px;background:repeating-linear-gradient(90deg,#a0a0a0 0 1px,transparent 1px 2px)"></div>

<svg style="position:absolute;left:23px;top:548px" width="9" height="9" viewBox="0 0 9 9"><rect x="0.5" y="0.5" width="8" height="8" fill="#fff" stroke="#747474"/><rect x="2" y="4" width="5" height="1" fill="#000"/><rect x="4" y="2" width="1" height="5" fill="#000"/></svg>
<svg style="position:absolute;left:38px;top:545px" width="16" height="15" viewBox="0 0 16 15"><defs><linearGradient id="fy" x1="0" y1="1" x2="1" y2="0"><stop offset="0" stop-color="#ffff00"/><stop offset="0.45" stop-color="#ffd800"/><stop offset="1" stop-color="#ff7a00"/></linearGradient></defs>
<path d="M1.5 0.5 H7.5 L8.5 2.5 H1.5 Z" fill="#ffc830" stroke="#c0b090" stroke-width="1"/>
<rect x="0.5" y="2.5" width="15" height="11" fill="url(#fy)" stroke="#a8a8c0"/></svg>
<div class="t" style="left:59px;top:547px;font-size:11px;white-space:pre">Курская АЭС. 2,3,4 энергоблоки. помещения подготовки "свежего" топлива АУПС_ИЗМ.2  <span style="color:#0000ff">[9]</span></div>
<div style="left:27px;top:568px;width:11px;height:1px;background:repeating-linear-gradient(90deg,#a0a0a0 0 1px,transparent 1px 2px)"></div>

<svg style="position:absolute;left:23px;top:564px" width="9" height="9" viewBox="0 0 9 9"><rect x="0.5" y="0.5" width="8" height="8" fill="#fff" stroke="#747474"/><rect x="2" y="4" width="5" height="1" fill="#000"/><rect x="4" y="2" width="1" height="5" fill="#000"/></svg>
<svg style="position:absolute;left:38px;top:561px" width="16" height="15" viewBox="0 0 16 15"><defs><linearGradient id="fy" x1="0" y1="1" x2="1" y2="0"><stop offset="0" stop-color="#ffff00"/><stop offset="0.45" stop-color="#ffd800"/><stop offset="1" stop-color="#ff7a00"/></linearGradient></defs>
<path d="M1.5 0.5 H7.5 L8.5 2.5 H1.5 Z" fill="#ffc830" stroke="#c0b090" stroke-width="1"/>
<rect x="0.5" y="2.5" width="15" height="11" fill="url(#fy)" stroke="#a8a8c0"/></svg>
<div class="t" style="left:59px;top:563px;font-size:11px;white-space:pre">Курская АЭС. 2,3,4 энергоблоки. помещения подготовки "свежего" топлива АУПС_ИЗМ.3  <span style="color:#0000ff">[3]</span></div>
<div style="left:27px;top:584px;width:11px;height:1px;background:repeating-linear-gradient(90deg,#a0a0a0 0 1px,transparent 1px 2px)"></div>

<svg style="position:absolute;left:23px;top:580px" width="9" height="9" viewBox="0 0 9 9"><rect x="0.5" y="0.5" width="8" height="8" fill="#fff" stroke="#747474"/><rect x="2" y="4" width="5" height="1" fill="#000"/><rect x="4" y="2" width="1" height="5" fill="#000"/></svg>
<svg style="position:absolute;left:38px;top:577px" width="16" height="15" viewBox="0 0 16 15"><defs><linearGradient id="fy" x1="0" y1="1" x2="1" y2="0"><stop offset="0" stop-color="#ffff00"/><stop offset="0.45" stop-color="#ffd800"/><stop offset="1" stop-color="#ff7a00"/></linearGradient></defs>
<path d="M1.5 0.5 H7.5 L8.5 2.5 H1.5 Z" fill="#ffc830" stroke="#c0b090" stroke-width="1"/>
<rect x="0.5" y="2.5" width="15" height="11" fill="url(#fy)" stroke="#a8a8c0"/></svg>
<div class="t" style="left:59px;top:579px;font-size:11px;white-space:pre">Курская АЭС-2. Энергоблоки №1 и №2  <span style="color:#0000ff">[48]</span></div>
<div style="left:27px;top:600px;width:11px;height:1px;background:repeating-linear-gradient(90deg,#a0a0a0 0 1px,transparent 1px 2px)"></div>

<svg style="position:absolute;left:23px;top:596px" width="9" height="9" viewBox="0 0 9 9"><rect x="0.5" y="0.5" width="8" height="8" fill="#fff" stroke="#747474"/><rect x="2" y="4" width="5" height="1" fill="#000"/><rect x="4" y="2" width="1" height="5" fill="#000"/></svg>
<svg style="position:absolute;left:38px;top:593px" width="16" height="15" viewBox="0 0 16 15"><defs><linearGradient id="fy" x1="0" y1="1" x2="1" y2="0"><stop offset="0" stop-color="#ffff00"/><stop offset="0.45" stop-color="#ffd800"/><stop offset="1" stop-color="#ff7a00"/></linearGradient></defs>
<path d="M1.5 0.5 H7.5 L8.5 2.5 H1.5 Z" fill="#ffc830" stroke="#c0b090" stroke-width="1"/>
<rect x="0.5" y="2.5" width="15" height="11" fill="url(#fy)" stroke="#a8a8c0"/></svg>
<div class="t" style="left:59px;top:595px;font-size:11px;white-space:pre">Лесная поляна  <span style="color:#0000ff">[17]</span></div>
<div style="left:27px;top:616px;width:11px;height:1px;background:repeating-linear-gradient(90deg,#a0a0a0 0 1px,transparent 1px 2px)"></div>

<svg style="position:absolute;left:23px;top:612px" width="9" height="9" viewBox="0 0 9 9"><rect x="0.5" y="0.5" width="8" height="8" fill="#fff" stroke="#747474"/><rect x="2" y="4" width="5" height="1" fill="#000"/><rect x="4" y="2" width="1" height="5" fill="#000"/></svg>
<svg style="position:absolute;left:38px;top:609px" width="16" height="15" viewBox="0 0 16 15"><defs><linearGradient id="fy" x1="0" y1="1" x2="1" y2="0"><stop offset="0" stop-color="#ffff00"/><stop offset="0.45" stop-color="#ffd800"/><stop offset="1" stop-color="#ff7a00"/></linearGradient></defs>
<path d="M1.5 0.5 H7.5 L8.5 2.5 H1.5 Z" fill="#ffc830" stroke="#c0b090" stroke-width="1"/>
<rect x="0.5" y="2.5" width="15" height="11" fill="url(#fy)" stroke="#a8a8c0"/></svg>
<div class="t" style="left:59px;top:611px;font-size:11px;white-space:pre">Монтаж газовых труб верха реактора  <span style="color:#0000ff">[8]</span></div>
<div style="left:27px;top:632px;width:11px;height:1px;background:repeating-linear-gradient(90deg,#a0a0a0 0 1px,transparent 1px 2px)"></div>

<svg style="position:absolute;left:23px;top:628px" width="9" height="9" viewBox="0 0 9 9"><rect x="0.5" y="0.5" width="8" height="8" fill="#fff" stroke="#747474"/><rect x="2" y="4" width="5" height="1" fill="#000"/><rect x="4" y="2" width="1" height="5" fill="#000"/></svg>
<svg style="position:absolute;left:38px;top:625px" width="16" height="15" viewBox="0 0 16 15"><defs><linearGradient id="fy" x1="0" y1="1" x2="1" y2="0"><stop offset="0" stop-color="#ffff00"/><stop offset="0.45" stop-color="#ffd800"/><stop offset="1" stop-color="#ff7a00"/></linearGradient></defs>
<path d="M1.5 0.5 H7.5 L8.5 2.5 H1.5 Z" fill="#ffc830" stroke="#c0b090" stroke-width="1"/>
<rect x="0.5" y="2.5" width="15" height="11" fill="url(#fy)" stroke="#a8a8c0"/></svg>
<div class="t" style="left:59px;top:627px;font-size:11px;white-space:pre">МСЧ-135  <span style="color:#0000ff">[9]</span></div>
<div style="left:27px;top:648px;width:11px;height:1px;background:repeating-linear-gradient(90deg,#a0a0a0 0 1px,transparent 1px 2px)"></div>

<svg style="position:absolute;left:23px;top:644px" width="9" height="9" viewBox="0 0 9 9"><rect x="0.5" y="0.5" width="8" height="8" fill="#fff" stroke="#747474"/><rect x="2" y="4" width="5" height="1" fill="#000"/><rect x="4" y="2" width="1" height="5" fill="#000"/></svg>
<svg style="position:absolute;left:38px;top:641px" width="16" height="15" viewBox="0 0 16 15"><defs><linearGradient id="fy" x1="0" y1="1" x2="1" y2="0"><stop offset="0" stop-color="#ffff00"/><stop offset="0.45" stop-color="#ffd800"/><stop offset="1" stop-color="#ff7a00"/></linearGradient></defs>
<path d="M1.5 0.5 H7.5 L8.5 2.5 H1.5 Z" fill="#ffc830" stroke="#c0b090" stroke-width="1"/>
<rect x="0.5" y="2.5" width="15" height="11" fill="url(#fy)" stroke="#a8a8c0"/></svg>
<div class="t" style="left:59px;top:643px;font-size:11px;white-space:pre">Новая папка  <span style="color:#0000ff">[1]</span></div>
<div style="left:27px;top:664px;width:11px;height:1px;background:repeating-linear-gradient(90deg,#a0a0a0 0 1px,transparent 1px 2px)"></div>

<svg style="position:absolute;left:23px;top:660px" width="9" height="9" viewBox="0 0 9 9"><rect x="0.5" y="0.5" width="8" height="8" fill="#fff" stroke="#747474"/><rect x="2" y="4" width="5" height="1" fill="#000"/><rect x="4" y="2" width="1" height="5" fill="#000"/></svg>
<svg style="position:absolute;left:38px;top:657px" width="16" height="15" viewBox="0 0 16 15"><defs><linearGradient id="fy" x1="0" y1="1" x2="1" y2="0"><stop offset="0" stop-color="#ffff00"/><stop offset="0.45" stop-color="#ffd800"/><stop offset="1" stop-color="#ff7a00"/></linearGradient></defs>
<path d="M1.5 0.5 H7.5 L8.5 2.5 H1.5 Z" fill="#ffc830" stroke="#c0b090" stroke-width="1"/>
<rect x="0.5" y="2.5" width="15" height="11" fill="url(#fy)" stroke="#a8a8c0"/></svg>
<div class="t" style="left:59px;top:659px;font-size:11px;white-space:pre">Освещение изм.2  <span style="color:#0000ff">[16]</span></div>
<div style="left:27px;top:680px;width:11px;height:1px;background:repeating-linear-gradient(90deg,#a0a0a0 0 1px,transparent 1px 2px)"></div>

<svg style="position:absolute;left:23px;top:676px" width="9" height="9" viewBox="0 0 9 9"><rect x="0.5" y="0.5" width="8" height="8" fill="#fff" stroke="#747474"/><rect x="2" y="4" width="5" height="1" fill="#000"/><rect x="4" y="2" width="1" height="5" fill="#000"/></svg>
<svg style="position:absolute;left:38px;top:673px" width="16" height="15" viewBox="0 0 16 15"><defs><linearGradient id="fy" x1="0" y1="1" x2="1" y2="0"><stop offset="0" stop-color="#ffff00"/><stop offset="0.45" stop-color="#ffd800"/><stop offset="1" stop-color="#ff7a00"/></linearGradient></defs>
<path d="M1.5 0.5 H7.5 L8.5 2.5 H1.5 Z" fill="#ffc830" stroke="#c0b090" stroke-width="1"/>
<rect x="0.5" y="2.5" width="15" height="11" fill="url(#fy)" stroke="#a8a8c0"/></svg>
<div class="t" style="left:59px;top:675px;font-size:11px;white-space:pre">ОЧИСТНЫЕ СООРУЖЕНИЯ  <span style="color:#0000ff">[23]</span></div>
<div style="left:27px;top:696px;width:11px;height:1px;background:repeating-linear-gradient(90deg,#a0a0a0 0 1px,transparent 1px 2px)"></div>

<svg style="position:absolute;left:23px;top:692px" width="9" height="9" viewBox="0 0 9 9"><rect x="0.5" y="0.5" width="8" height="8" fill="#fff" stroke="#747474"/><rect x="2" y="4" width="5" height="1" fill="#000"/><rect x="4" y="2" width="1" height="5" fill="#000"/></svg>
<svg style="position:absolute;left:38px;top:689px" width="16" height="15" viewBox="0 0 16 15"><defs><linearGradient id="fy" x1="0" y1="1" x2="1" y2="0"><stop offset="0" stop-color="#ffff00"/><stop offset="0.45" stop-color="#ffd800"/><stop offset="1" stop-color="#ff7a00"/></linearGradient></defs>
<path d="M1.5 0.5 H7.5 L8.5 2.5 H1.5 Z" fill="#ffc830" stroke="#c0b090" stroke-width="1"/>
<rect x="0.5" y="2.5" width="15" height="11" fill="url(#fy)" stroke="#a8a8c0"/></svg>
<div class="t" style="left:59px;top:691px;font-size:11px;white-space:pre">ПЕРЕСЧЕТ ИБК, ГО  <span style="color:#0000ff">[57]</span></div>
<div style="left:27px;top:712px;width:11px;height:1px;background:repeating-linear-gradient(90deg,#a0a0a0 0 1px,transparent 1px 2px)"></div>

<svg style="position:absolute;left:23px;top:708px" width="9" height="9" viewBox="0 0 9 9"><rect x="0.5" y="0.5" width="8" height="8" fill="#fff" stroke="#747474"/><rect x="2" y="4" width="5" height="1" fill="#000"/><rect x="4" y="2" width="1" height="5" fill="#000"/></svg>
<svg style="position:absolute;left:38px;top:705px" width="16" height="15" viewBox="0 0 16 15"><defs><linearGradient id="fy" x1="0" y1="1" x2="1" y2="0"><stop offset="0" stop-color="#ffff00"/><stop offset="0.45" stop-color="#ffd800"/><stop offset="1" stop-color="#ff7a00"/></linearGradient></defs>
<path d="M1.5 0.5 H7.5 L8.5 2.5 H1.5 Z" fill="#ffc830" stroke="#c0b090" stroke-width="1"/>
<rect x="0.5" y="2.5" width="15" height="11" fill="url(#fy)" stroke="#a8a8c0"/></svg>
<div class="t" style="left:59px;top:707px;font-size:11px;white-space:pre">Площадка ТУК  <span style="color:#0000ff">[33]</span></div>
<div style="left:27px;top:728px;width:11px;height:1px;background:repeating-linear-gradient(90deg,#a0a0a0 0 1px,transparent 1px 2px)"></div>

<svg style="position:absolute;left:23px;top:724px" width="9" height="9" viewBox="0 0 9 9"><rect x="0.5" y="0.5" width="8" height="8" fill="#fff" stroke="#747474"/><rect x="2" y="4" width="5" height="1" fill="#000"/><rect x="4" y="2" width="1" height="5" fill="#000"/></svg>
<svg style="position:absolute;left:38px;top:721px" width="16" height="15" viewBox="0 0 16 15"><defs><linearGradient id="fy" x1="0" y1="1" x2="1" y2="0"><stop offset="0" stop-color="#ffff00"/><stop offset="0.45" stop-color="#ffd800"/><stop offset="1" stop-color="#ff7a00"/></linearGradient></defs>
<path d="M1.5 0.5 H7.5 L8.5 2.5 H1.5 Z" fill="#ffc830" stroke="#c0b090" stroke-width="1"/>
<rect x="0.5" y="2.5" width="15" height="11" fill="url(#fy)" stroke="#a8a8c0"/></svg>
<div class="t" style="left:59px;top:723px;font-size:11px;white-space:pre">Полторак Л.С.  <span style="color:#0000ff">[35]</span></div>
<div style="left:27px;top:744px;width:11px;height:1px;background:repeating-linear-gradient(90deg,#a0a0a0 0 1px,transparent 1px 2px)"></div>

<svg style="position:absolute;left:23px;top:740px" width="9" height="9" viewBox="0 0 9 9"><rect x="0.5" y="0.5" width="8" height="8" fill="#fff" stroke="#747474"/><rect x="2" y="4" width="5" height="1" fill="#000"/><rect x="4" y="2" width="1" height="5" fill="#000"/></svg>
<svg style="position:absolute;left:38px;top:737px" width="16" height="15" viewBox="0 0 16 15"><defs><linearGradient id="fy" x1="0" y1="1" x2="1" y2="0"><stop offset="0" stop-color="#ffff00"/><stop offset="0.45" stop-color="#ffd800"/><stop offset="1" stop-color="#ff7a00"/></linearGradient></defs>
<path d="M1.5 0.5 H7.5 L8.5 2.5 H1.5 Z" fill="#ffc830" stroke="#c0b090" stroke-width="1"/>
<rect x="0.5" y="2.5" width="15" height="11" fill="url(#fy)" stroke="#a8a8c0"/></svg>
<div class="t" style="left:59px;top:739px;font-size:11px;white-space:pre">Пускорезервная котельная  <span style="color:#0000ff">[6]</span></div>
<div style="left:27px;top:760px;width:11px;height:1px;background:repeating-linear-gradient(90deg,#a0a0a0 0 1px,transparent 1px 2px)"></div>

<svg style="position:absolute;left:23px;top:756px" width="9" height="9" viewBox="0 0 9 9"><rect x="0.5" y="0.5" width="8" height="8" fill="#fff" stroke="#747474"/><rect x="2" y="4" width="5" height="1" fill="#000"/><rect x="4" y="2" width="1" height="5" fill="#000"/></svg>
<svg style="position:absolute;left:38px;top:753px" width="16" height="15" viewBox="0 0 16 15"><defs><linearGradient id="fy" x1="0" y1="1" x2="1" y2="0"><stop offset="0" stop-color="#ffff00"/><stop offset="0.45" stop-color="#ffd800"/><stop offset="1" stop-color="#ff7a00"/></linearGradient></defs>
<path d="M1.5 0.5 H7.5 L8.5 2.5 H1.5 Z" fill="#ffc830" stroke="#c0b090" stroke-width="1"/>
<rect x="0.5" y="2.5" width="15" height="11" fill="url(#fy)" stroke="#a8a8c0"/></svg>
<div class="t" style="left:59px;top:755px;font-size:11px;white-space:pre">Ростовская АЭС  <span style="color:#0000ff">[10]</span></div>
<div style="left:27px;top:776px;width:11px;height:1px;background:repeating-linear-gradient(90deg,#a0a0a0 0 1px,transparent 1px 2px)"></div>

<svg style="position:absolute;left:23px;top:772px" width="9" height="9" viewBox="0 0 9 9"><rect x="0.5" y="0.5" width="8" height="8" fill="#fff" stroke="#747474"/><rect x="2" y="4" width="5" height="1" fill="#000"/><rect x="4" y="2" width="1" height="5" fill="#000"/></svg>
<svg style="position:absolute;left:38px;top:769px" width="16" height="15" viewBox="0 0 16 15"><defs><linearGradient id="fy" x1="0" y1="1" x2="1" y2="0"><stop offset="0" stop-color="#ffff00"/><stop offset="0.45" stop-color="#ffd800"/><stop offset="1" stop-color="#ff7a00"/></linearGradient></defs>
<path d="M1.5 0.5 H7.5 L8.5 2.5 H1.5 Z" fill="#ffc830" stroke="#c0b090" stroke-width="1"/>
<rect x="0.5" y="2.5" width="15" height="11" fill="url(#fy)" stroke="#a8a8c0"/></svg>
<div class="t" style="left:59px;top:771px;font-size:11px;white-space:pre">Ростовская АЭС_ИЗМ.1  <span style="color:#0000ff">[8]</span></div>
<div style="left:27px;top:792px;width:11px;height:1px;background:repeating-linear-gradient(90deg,#a0a0a0 0 1px,transparent 1px 2px)"></div>

<svg style="position:absolute;left:23px;top:788px" width="9" height="9" viewBox="0 0 9 9"><rect x="0.5" y="0.5" width="8" height="8" fill="#fff" stroke="#747474"/><rect x="2" y="4" width="5" height="1" fill="#000"/><rect x="4" y="2" width="1" height="5" fill="#000"/></svg>
<svg style="position:absolute;left:38px;top:785px" width="16" height="15" viewBox="0 0 16 15"><defs><linearGradient id="fy" x1="0" y1="1" x2="1" y2="0"><stop offset="0" stop-color="#ffff00"/><stop offset="0.45" stop-color="#ffd800"/><stop offset="1" stop-color="#ff7a00"/></linearGradient></defs>
<path d="M1.5 0.5 H7.5 L8.5 2.5 H1.5 Z" fill="#ffc830" stroke="#c0b090" stroke-width="1"/>
<rect x="0.5" y="2.5" width="15" height="11" fill="url(#fy)" stroke="#a8a8c0"/></svg>
<div class="t" style="left:59px;top:787px;font-size:11px;white-space:pre">Ростовская АЭС_Освещение  <span style="color:#0000ff">[43]</span></div>
<div style="left:27px;top:808px;width:11px;height:1px;background:repeating-linear-gradient(90deg,#a0a0a0 0 1px,transparent 1px 2px)"></div>

<svg style="position:absolute;left:23px;top:804px" width="9" height="9" viewBox="0 0 9 9"><rect x="0.5" y="0.5" width="8" height="8" fill="#fff" stroke="#747474"/><rect x="2" y="4" width="5" height="1" fill="#000"/><rect x="4" y="2" width="1" height="5" fill="#000"/></svg>
<svg style="position:absolute;left:38px;top:801px" width="16" height="15" viewBox="0 0 16 15"><defs><linearGradient id="fy" x1="0" y1="1" x2="1" y2="0"><stop offset="0" stop-color="#ffff00"/><stop offset="0.45" stop-color="#ffd800"/><stop offset="1" stop-color="#ff7a00"/></linearGradient></defs>
<path d="M1.5 0.5 H7.5 L8.5 2.5 H1.5 Z" fill="#ffc830" stroke="#c0b090" stroke-width="1"/>
<rect x="0.5" y="2.5" width="15" height="11" fill="url(#fy)" stroke="#a8a8c0"/></svg>
<div class="t" style="left:59px;top:803px;font-size:11px;white-space:pre">СРЕДНОЙ ЗАВОД  <span style="color:#0000ff">[6]</span></div>
</div>
<div style="left:542px;top:178px;width:16px;height:807px;background:linear-gradient(90deg,#e3e3e3,#f0f0f0 30%,#f0f0f0 70%,#e8e8e8)"></div>
<svg style="position:absolute;left:545px;top:182px" width="10" height="8" viewBox="0 0 10 8"><path d="M1 6 L5 2 L9 6 Z" fill="#404040"/></svg>
<svg style="position:absolute;left:545px;top:972px" width="10" height="8" viewBox="0 0 10 8"><path d="M1 2 L5 6 L9 2 Z" fill="#404040"/></svg>
<div style="left:542px;top:330px;width:15px;height:165px;box-sizing:border-box;border:1px solid #8e8f8f;border-radius:2px;background:linear-gradient(90deg,#f6f6f6,#e8e8e8 45%,#d0d0d4 80%,#c4c4c8)"></div>
<svg style="position:absolute;left:544px;top:406px" width="10" height="8" viewBox="0 0 10 8"><path d="M2 1.5 H8 M2 3.5 H8 M2 5.5 H8" stroke="#606060"/></svg>
<div style="left:6px;top:985px;width:536px;height:17px;background:linear-gradient(180deg,#e3e3e3,#f0f0f0 30%,#f0f0f0 70%,#e8e8e8)"></div>
<div style="left:542px;top:985px;width:16px;height:17px;background:#f0f0f0"></div>
<svg style="position:absolute;left:9px;top:988px" width="8" height="10" viewBox="0 0 8 10"><path d="M6 1 L2 5 L6 9 Z" fill="#404040"/></svg>
<svg style="position:absolute;left:529px;top:988px" width="8" height="10" viewBox="0 0 8 10"><path d="M2 1 L6 5 L2 9 Z" fill="#404040"/></svg>
<div style="left:24px;top:986px;width:268px;height:15px;box-sizing:border-box;border:1px solid #9a9a9a;border-radius:2px;background:linear-gradient(180deg,#f4f4f4,#e4e4e4 50%,#d8d8d8)"></div>
<svg style="position:absolute;left:151px;top:988px" width="10" height="10" viewBox="0 0 10 10"><path d="M2.5 2 V8 M4.5 2 V8 M6.5 2 V8" stroke="#606060"/></svg>
<div style="left:1916px;top:101px;width:4px;height:907px;background:#7f7f7f"></div>
<div style="left:567px;top:153px;width:1px;height:855px;background:#ffffff"></div>
<div style="left:568px;top:153px;width:1px;height:855px;background:#ffffff"></div>
<div style="left:569px;top:174px;width:1px;height:832px;background:#e3e3e3"></div>
<div style="left:568px;top:1006px;width:1346px;height:1px;background:#a0a0a0"></div>
<div style="left:567px;top:1007px;width:1348px;height:1px;background:#696969"></div>
<div style="left:1913px;top:173px;width:1px;height:834px;background:#a0a0a0"></div>
<div style="left:1914px;top:173px;width:1px;height:835px;background:#696969"></div>
<div style="left:646px;top:173px;width:1267px;height:1px;background:#ffffff"></div>
<div style="left:647px;top:156px;width:70px;height:17px;box-sizing:border-box;border-top:1px solid #fff;border-left:1px solid #fff;border-right:2px solid #8a8a8a;background:#f0f0f0"></div>
<div class="t" style="left:653px;top:160px;font-size:11px;color:#000;">Параметры</div>
<div style="left:717px;top:156px;width:101px;height:17px;box-sizing:border-box;border-top:1px solid #fff;border-left:1px solid #fff;border-right:2px solid #8a8a8a;background:#f0f0f0"></div>
<div class="t" style="left:723px;top:160px;font-size:11px;color:#000;">Объектная смета</div>
<div style="left:818px;top:156px;width:154px;height:17px;box-sizing:border-box;border-top:1px solid #fff;border-left:1px solid #fff;border-right:2px solid #8a8a8a;background:#f0f0f0"></div>
<div class="t" style="left:824px;top:160px;font-size:11px;color:#000;">Объектный сметный расчет</div>
<div style="left:972px;top:156px;width:42px;height:17px;box-sizing:border-box;border-top:1px solid #fff;border-left:1px solid #fff;border-right:2px solid #8a8a8a;background:#f0f0f0"></div>
<div class="t" style="left:978px;top:160px;font-size:11px;color:#000;">WBS</div>
<div style="left:1014px;top:156px;width:42px;height:17px;box-sizing:border-box;border-top:1px solid #fff;border-left:1px solid #fff;border-right:2px solid #8a8a8a;background:#f0f0f0"></div>
<div class="t" style="left:1020px;top:160px;font-size:11px;color:#000;">CBSI</div>
<div style="left:1056px;top:156px;width:43px;height:17px;box-sizing:border-box;border-top:1px solid #fff;border-left:1px solid #fff;border-right:2px solid #8a8a8a;background:#f0f0f0"></div>
<div class="t" style="left:1062px;top:160px;font-size:11px;color:#000;">CBSII</div>
<div style="left:1099px;top:156px;width:42px;height:17px;box-sizing:border-box;border-top:1px solid #fff;border-left:1px solid #fff;border-right:2px solid #8a8a8a;background:#f0f0f0"></div>
<div class="t" style="left:1105px;top:160px;font-size:11px;color:#000;">CCP</div>
<div style="left:1141px;top:156px;width:95px;height:17px;box-sizing:border-box;border-top:1px solid #fff;border-left:1px solid #fff;border-right:2px solid #8a8a8a;background:#f0f0f0"></div>
<div class="t" style="left:1147px;top:160px;font-size:11px;color:#000;">Поиск объектов</div>
<div style="left:568px;top:153px;width:79px;height:21px;box-sizing:border-box;border-top:1px solid #fff;border-left:1px solid #fff;border-right:2px solid #696969;background:#f0f0f0"></div>
<div class="t" style="left:577px;top:157px;font-size:11px;color:#000;">Содержание</div>
<div style="left:572px;top:194px;width:1204px;height:1px;background:#a0a0a0"></div>
<div style="left:572px;top:194px;width:1px;height:769px;background:#a0a0a0"></div>
<div style="left:573px;top:195px;width:1202px;height:767px;background:#fff"></div>
<div style="left:1775px;top:194px;width:1px;height:769px;background:#a0a0a0"></div>
<div style="left:572px;top:962px;width:1204px;height:1px;background:#a0a0a0"></div>
<div style="left:572px;top:963px;width:1340px;height:1px;background:#ffffff"></div>
<div style="left:1777px;top:194px;width:134px;height:1px;background:#a0a0a0"></div>
<div style="left:1777px;top:962px;width:135px;height:1px;background:#a0a0a0"></div>
<div style="left:1776px;top:195px;width:1px;height:767px;background:#ffffff"></div>
<div class="t" style="left:1544px;width:600px;text-align:center;top:203px;font-size:11px;color:#000;">Отметить всё</div>
<div class="t" style="left:1544px;width:600px;text-align:center;top:224px;font-size:11px;color:#000;">Снять все отметки</div>
<div class="t" style="left:1544px;width:600px;text-align:center;top:245px;font-size:11px;color:#000;">Отметить с вложенными</div>
<div class="t" style="left:1544px;width:600px;text-align:center;top:266px;font-size:11px;color:#000;">Снять с вложенными</div>
<div class="t" style="left:1544px;width:600px;text-align:center;top:287px;font-size:11px;color:#000;">Развернуть всё</div>
<div class="t" style="left:1544px;width:600px;text-align:center;top:308px;font-size:11px;color:#000;">Свернуть всё</div>
<div class="t" style="left:1544px;width:600px;text-align:center;top:329px;font-size:11px;color:#000;">Развернуть вложенные</div>
<div class="t" style="left:1544px;width:600px;text-align:center;top:350px;font-size:11px;color:#000;">Свернуть вложенные</div>
<div style="left:582px;top:210px;width:1px;height:166px;background:repeating-linear-gradient(180deg,#a0a0a0 0 1px,transparent 1px 2px)"></div>
<div style="left:628px;top:196px;width:358px;height:16px;background:#ececec"></div>
<svg style="position:absolute;left:578px;top:200px" width="9" height="9" viewBox="0 0 9 9"><rect x="0.5" y="0.5" width="8" height="8" fill="#fff" stroke="#747474"/><rect x="2" y="4" width="5" height="1" fill="#000"/></svg>
<div style="left:588px;top:204px;width:7px;height:1px;background:repeating-linear-gradient(90deg,#a0a0a0 0 1px,transparent 1px 2px)"></div>
<svg style="position:absolute;left:595px;top:198px" width="11" height="11" viewBox="0 0 11 11"><rect x="0.5" y="0.5" width="10" height="10" fill="#fff" stroke="#6e6e6e"/><path d="M2.4 5.2 L4.4 7.6 L8.6 2.6" stroke="#000" stroke-width="2" fill="none" stroke-linejoin="miter"/></svg>
<svg style="position:absolute;left:608px;top:196px" width="18" height="17" viewBox="0 0 18 17"><defs><linearGradient id="bg1" x1="0" y1="1" x2="1" y2="0"><stop offset="0" stop-color="#08b010"/><stop offset="0.6" stop-color="#20d830"/><stop offset="1" stop-color="#50e860"/></linearGradient></defs>
<path d="M1 10 L11.5 14 L11.5 16.2 L1 12.2 Z" fill="#f4fff4" stroke="#909890" stroke-width="0.6"/>
<path d="M2.5 11.6 L11 14.8" stroke="#40c040" stroke-width="0.9" stroke-dasharray="1.2 1.3"/>
<path d="M11.5 14 L17.5 5.5 L17.5 7.5 L11.5 16.2 Z" fill="#c8d8c8" stroke="#909890" stroke-width="0.6"/>
<path d="M1 10 L8.5 1.5 L17.5 3.5 L17.5 5.5 L11.5 14 Z" fill="url(#bg1)"/>
<path d="M10 3.5 L14.5 4.5" stroke="#a8f0b0" stroke-width="1.5"/></svg>
<div class="t" style="left:630px;top:199px;font-size:11px;color:#000;">Автоматизация систем вентиляции, кондиционирования и отопления</div>
<svg style="position:absolute;left:614px;top:214px" width="11" height="11" viewBox="0 0 11 11"><rect x="0.5" y="0.5" width="10" height="10" fill="#fff" stroke="#6e6e6e"/><path d="M2.4 5.2 L4.4 7.6 L8.6 2.6" stroke="#000" stroke-width="2" fill="none" stroke-linejoin="miter"/></svg>
<div style="left:601px;top:220px;width:13px;height:1px;background:repeating-linear-gradient(90deg,#a0a0a0 0 1px,transparent 1px 2px)"></div>
<svg style="position:absolute;left:629px;top:212px" width="14" height="16" viewBox="0 0 14 16"><rect x="2.5" y="0.5" width="11" height="14" fill="#fff8b8" stroke="#a8a8a8"/>
<rect x="12" y="1" width="1.2" height="13" fill="#f0f060"/>
<path d="M0.5 2.5 H7.5 L11.5 6.5 V15.5 H0.5 Z" fill="#80f898" stroke="#909090"/>
<rect x="1" y="3" width="3" height="6" fill="#d0ffd8"/>
<path d="M7.5 2.5 V6.5 H11.5" fill="#d8ffe0" stroke="#909090"/>
<g stroke="#606060" stroke-width="1"><path d="M2 5.5 H5"/><path d="M2 7.5 H5"/><path d="M2 9.5 H5"/><path d="M2 11.5 H5"/></g></svg>
<div class="t" style="left:650px;top:215px;font-size:11px;color:#000;">Здание караула и спецкомендатуры (надземная часть)</div>
<svg style="position:absolute;left:614px;top:230px" width="11" height="11" viewBox="0 0 11 11"><rect x="0.5" y="0.5" width="10" height="10" fill="#fff" stroke="#6e6e6e"/><path d="M2.4 5.2 L4.4 7.6 L8.6 2.6" stroke="#000" stroke-width="2" fill="none" stroke-linejoin="miter"/></svg>
<div style="left:601px;top:236px;width:13px;height:1px;background:repeating-linear-gradient(90deg,#a0a0a0 0 1px,transparent 1px 2px)"></div>
<svg style="position:absolute;left:629px;top:228px" width="14" height="16" viewBox="0 0 14 16"><rect x="2.5" y="0.5" width="11" height="14" fill="#fff8b8" stroke="#a8a8a8"/>
<rect x="12" y="1" width="1.2" height="13" fill="#f0f060"/>
<path d="M0.5 2.5 H7.5 L11.5 6.5 V15.5 H0.5 Z" fill="#80f898" stroke="#909090"/>
<rect x="1" y="3" width="3" height="6" fill="#d0ffd8"/>
<path d="M7.5 2.5 V6.5 H11.5" fill="#d8ffe0" stroke="#909090"/>
<g stroke="#606060" stroke-width="1"><path d="M2 5.5 H5"/><path d="M2 7.5 H5"/><path d="M2 9.5 H5"/><path d="M2 11.5 H5"/></g></svg>
<div class="t" style="left:650px;top:231px;font-size:11px;color:#000;">Здание караула и спецкомендатуры (убежище)</div>
<svg style="position:absolute;left:614px;top:246px" width="11" height="11" viewBox="0 0 11 11"><rect x="0.5" y="0.5" width="10" height="10" fill="#fff" stroke="#6e6e6e"/><path d="M2.4 5.2 L4.4 7.6 L8.6 2.6" stroke="#000" stroke-width="2" fill="none" stroke-linejoin="miter"/></svg>
<div style="left:601px;top:252px;width:13px;height:1px;background:repeating-linear-gradient(90deg,#a0a0a0 0 1px,transparent 1px 2px)"></div>
<svg style="position:absolute;left:629px;top:244px" width="14" height="16" viewBox="0 0 14 16"><rect x="2.5" y="0.5" width="11" height="14" fill="#fff8b8" stroke="#a8a8a8"/>
<rect x="12" y="1" width="1.2" height="13" fill="#f0f060"/>
<path d="M0.5 2.5 H7.5 L11.5 6.5 V15.5 H0.5 Z" fill="#80f898" stroke="#909090"/>
<rect x="1" y="3" width="3" height="6" fill="#d0ffd8"/>
<path d="M7.5 2.5 V6.5 H11.5" fill="#d8ffe0" stroke="#909090"/>
<g stroke="#606060" stroke-width="1"><path d="M2 5.5 H5"/><path d="M2 7.5 H5"/><path d="M2 9.5 H5"/><path d="M2 11.5 H5"/></g></svg>
<div class="t" style="left:650px;top:247px;font-size:11px;color:#000;">Пристройка к зданию 319. Холодильная станция 319.8</div>
<svg style="position:absolute;left:578px;top:264px" width="9" height="9" viewBox="0 0 9 9"><rect x="0.5" y="0.5" width="8" height="8" fill="#fff" stroke="#747474"/><rect x="2" y="4" width="5" height="1" fill="#000"/></svg>
<div style="left:588px;top:268px;width:7px;height:1px;background:repeating-linear-gradient(90deg,#a0a0a0 0 1px,transparent 1px 2px)"></div>
<svg style="position:absolute;left:595px;top:262px" width="11" height="11" viewBox="0 0 11 11"><rect x="0.5" y="0.5" width="10" height="10" fill="#fff" stroke="#6e6e6e"/><path d="M2.4 5.2 L4.4 7.6 L8.6 2.6" stroke="#000" stroke-width="2" fill="none" stroke-linejoin="miter"/></svg>
<svg style="position:absolute;left:608px;top:260px" width="18" height="17" viewBox="0 0 18 17"><defs><linearGradient id="bg1" x1="0" y1="1" x2="1" y2="0"><stop offset="0" stop-color="#08b010"/><stop offset="0.6" stop-color="#20d830"/><stop offset="1" stop-color="#50e860"/></linearGradient></defs>
<path d="M1 10 L11.5 14 L11.5 16.2 L1 12.2 Z" fill="#f4fff4" stroke="#909890" stroke-width="0.6"/>
<path d="M2.5 11.6 L11 14.8" stroke="#40c040" stroke-width="0.9" stroke-dasharray="1.2 1.3"/>
<path d="M11.5 14 L17.5 5.5 L17.5 7.5 L11.5 16.2 Z" fill="#c8d8c8" stroke="#909890" stroke-width="0.6"/>
<path d="M1 10 L8.5 1.5 L17.5 3.5 L17.5 5.5 L11.5 14 Z" fill="url(#bg1)"/>
<path d="M10 3.5 L14.5 4.5" stroke="#a8f0b0" stroke-width="1.5"/></svg>
<div class="t" style="left:630px;top:263px;font-size:11px;color:#000;">Автоматизация систем водоснабжения и канализации</div>
<svg style="position:absolute;left:614px;top:278px" width="11" height="11" viewBox="0 0 11 11"><rect x="0.5" y="0.5" width="10" height="10" fill="#fff" stroke="#6e6e6e"/><path d="M2.4 5.2 L4.4 7.6 L8.6 2.6" stroke="#000" stroke-width="2" fill="none" stroke-linejoin="miter"/></svg>
<div style="left:601px;top:284px;width:13px;height:1px;background:repeating-linear-gradient(90deg,#a0a0a0 0 1px,transparent 1px 2px)"></div>
<svg style="position:absolute;left:629px;top:276px" width="14" height="16" viewBox="0 0 14 16"><rect x="2.5" y="0.5" width="11" height="14" fill="#fff8b8" stroke="#a8a8a8"/>
<rect x="12" y="1" width="1.2" height="13" fill="#f0f060"/>
<path d="M0.5 2.5 H7.5 L11.5 6.5 V15.5 H0.5 Z" fill="#80f898" stroke="#909090"/>
<rect x="1" y="3" width="3" height="6" fill="#d0ffd8"/>
<path d="M7.5 2.5 V6.5 H11.5" fill="#d8ffe0" stroke="#909090"/>
<g stroke="#606060" stroke-width="1"><path d="M2 5.5 H5"/><path d="M2 7.5 H5"/><path d="M2 9.5 H5"/><path d="M2 11.5 H5"/></g></svg>
<div class="t" style="left:650px;top:279px;font-size:11px;color:#000;">Здание караула и спецкомендатуры (надземная часть)</div>
<svg style="position:absolute;left:578px;top:296px" width="9" height="9" viewBox="0 0 9 9"><rect x="0.5" y="0.5" width="8" height="8" fill="#fff" stroke="#747474"/><rect x="2" y="4" width="5" height="1" fill="#000"/></svg>
<div style="left:588px;top:300px;width:7px;height:1px;background:repeating-linear-gradient(90deg,#a0a0a0 0 1px,transparent 1px 2px)"></div>
<svg style="position:absolute;left:595px;top:294px" width="11" height="11" viewBox="0 0 11 11"><rect x="0.5" y="0.5" width="10" height="10" fill="#fff" stroke="#6e6e6e"/><path d="M2.4 5.2 L4.4 7.6 L8.6 2.6" stroke="#000" stroke-width="2" fill="none" stroke-linejoin="miter"/></svg>
<svg style="position:absolute;left:608px;top:292px" width="18" height="17" viewBox="0 0 18 17"><defs><linearGradient id="bg1" x1="0" y1="1" x2="1" y2="0"><stop offset="0" stop-color="#08b010"/><stop offset="0.6" stop-color="#20d830"/><stop offset="1" stop-color="#50e860"/></linearGradient></defs>
<path d="M1 10 L11.5 14 L11.5 16.2 L1 12.2 Z" fill="#f4fff4" stroke="#909890" stroke-width="0.6"/>
<path d="M2.5 11.6 L11 14.8" stroke="#40c040" stroke-width="0.9" stroke-dasharray="1.2 1.3"/>
<path d="M11.5 14 L17.5 5.5 L17.5 7.5 L11.5 16.2 Z" fill="#c8d8c8" stroke="#909890" stroke-width="0.6"/>
<path d="M1 10 L8.5 1.5 L17.5 3.5 L17.5 5.5 L11.5 14 Z" fill="url(#bg1)"/>
<path d="M10 3.5 L14.5 4.5" stroke="#a8f0b0" stroke-width="1.5"/></svg>
<div class="t" style="left:630px;top:295px;font-size:11px;color:#000;">КИП</div>
<svg style="position:absolute;left:614px;top:310px" width="11" height="11" viewBox="0 0 11 11"><rect x="0.5" y="0.5" width="10" height="10" fill="#fff" stroke="#6e6e6e"/><path d="M2.4 5.2 L4.4 7.6 L8.6 2.6" stroke="#000" stroke-width="2" fill="none" stroke-linejoin="miter"/></svg>
<div style="left:601px;top:316px;width:13px;height:1px;background:repeating-linear-gradient(90deg,#a0a0a0 0 1px,transparent 1px 2px)"></div>
<svg style="position:absolute;left:629px;top:308px" width="14" height="16" viewBox="0 0 14 16"><rect x="2.5" y="0.5" width="11" height="14" fill="#fff8b8" stroke="#a8a8a8"/>
<rect x="12" y="1" width="1.2" height="13" fill="#f0f060"/>
<path d="M0.5 2.5 H7.5 L11.5 6.5 V15.5 H0.5 Z" fill="#80f898" stroke="#909090"/>
<rect x="1" y="3" width="3" height="6" fill="#d0ffd8"/>
<path d="M7.5 2.5 V6.5 H11.5" fill="#d8ffe0" stroke="#909090"/>
<g stroke="#606060" stroke-width="1"><path d="M2 5.5 H5"/><path d="M2 7.5 H5"/><path d="M2 9.5 H5"/><path d="M2 11.5 H5"/></g></svg>
<div class="t" style="left:650px;top:311px;font-size:11px;color:#000;">Здание караула. Спецкомендатура (убежище)</div>
<svg style="position:absolute;left:614px;top:326px" width="11" height="11" viewBox="0 0 11 11"><rect x="0.5" y="0.5" width="10" height="10" fill="#fff" stroke="#6e6e6e"/><path d="M2.4 5.2 L4.4 7.6 L8.6 2.6" stroke="#000" stroke-width="2" fill="none" stroke-linejoin="miter"/></svg>
<div style="left:601px;top:332px;width:13px;height:1px;background:repeating-linear-gradient(90deg,#a0a0a0 0 1px,transparent 1px 2px)"></div>
<svg style="position:absolute;left:629px;top:324px" width="14" height="16" viewBox="0 0 14 16"><rect x="2.5" y="0.5" width="11" height="14" fill="#fff8b8" stroke="#a8a8a8"/>
<rect x="12" y="1" width="1.2" height="13" fill="#f0f060"/>
<path d="M0.5 2.5 H7.5 L11.5 6.5 V15.5 H0.5 Z" fill="#80f898" stroke="#909090"/>
<rect x="1" y="3" width="3" height="6" fill="#d0ffd8"/>
<path d="M7.5 2.5 V6.5 H11.5" fill="#d8ffe0" stroke="#909090"/>
<g stroke="#606060" stroke-width="1"><path d="M2 5.5 H5"/><path d="M2 7.5 H5"/><path d="M2 9.5 H5"/><path d="M2 11.5 H5"/></g></svg>
<div class="t" style="left:650px;top:327px;font-size:11px;color:#000;">Пристройка к зданию 319. Холодильная станция 319.8</div>
<svg style="position:absolute;left:578px;top:344px" width="9" height="9" viewBox="0 0 9 9"><rect x="0.5" y="0.5" width="8" height="8" fill="#fff" stroke="#747474"/><rect x="2" y="4" width="5" height="1" fill="#000"/></svg>
<div style="left:588px;top:348px;width:7px;height:1px;background:repeating-linear-gradient(90deg,#a0a0a0 0 1px,transparent 1px 2px)"></div>
<svg style="position:absolute;left:595px;top:342px" width="11" height="11" viewBox="0 0 11 11"><rect x="0.5" y="0.5" width="10" height="10" fill="#fff" stroke="#6e6e6e"/><path d="M2.4 5.2 L4.4 7.6 L8.6 2.6" stroke="#000" stroke-width="2" fill="none" stroke-linejoin="miter"/></svg>
<svg style="position:absolute;left:608px;top:340px" width="18" height="17" viewBox="0 0 18 17"><defs><linearGradient id="bg1" x1="0" y1="1" x2="1" y2="0"><stop offset="0" stop-color="#08b010"/><stop offset="0.6" stop-color="#20d830"/><stop offset="1" stop-color="#50e860"/></linearGradient></defs>
<path d="M1 10 L11.5 14 L11.5 16.2 L1 12.2 Z" fill="#f4fff4" stroke="#909890" stroke-width="0.6"/>
<path d="M2.5 11.6 L11 14.8" stroke="#40c040" stroke-width="0.9" stroke-dasharray="1.2 1.3"/>
<path d="M11.5 14 L17.5 5.5 L17.5 7.5 L11.5 16.2 Z" fill="#c8d8c8" stroke="#909890" stroke-width="0.6"/>
<path d="M1 10 L8.5 1.5 L17.5 3.5 L17.5 5.5 L11.5 14 Z" fill="url(#bg1)"/>
<path d="M10 3.5 L14.5 4.5" stroke="#a8f0b0" stroke-width="1.5"/></svg>
<div class="t" style="left:630px;top:343px;font-size:11px;color:#000;">КИП систем водоснабжения</div>
<svg style="position:absolute;left:614px;top:358px" width="11" height="11" viewBox="0 0 11 11"><rect x="0.5" y="0.5" width="10" height="10" fill="#fff" stroke="#6e6e6e"/><path d="M2.4 5.2 L4.4 7.6 L8.6 2.6" stroke="#000" stroke-width="2" fill="none" stroke-linejoin="miter"/></svg>
<div style="left:601px;top:364px;width:13px;height:1px;background:repeating-linear-gradient(90deg,#a0a0a0 0 1px,transparent 1px 2px)"></div>
<svg style="position:absolute;left:629px;top:356px" width="14" height="16" viewBox="0 0 14 16"><rect x="2.5" y="0.5" width="11" height="14" fill="#fff8b8" stroke="#a8a8a8"/>
<rect x="12" y="1" width="1.2" height="13" fill="#f0f060"/>
<path d="M0.5 2.5 H7.5 L11.5 6.5 V15.5 H0.5 Z" fill="#80f898" stroke="#909090"/>
<rect x="1" y="3" width="3" height="6" fill="#d0ffd8"/>
<path d="M7.5 2.5 V6.5 H11.5" fill="#d8ffe0" stroke="#909090"/>
<g stroke="#606060" stroke-width="1"><path d="M2 5.5 H5"/><path d="M2 7.5 H5"/><path d="M2 9.5 H5"/><path d="M2 11.5 H5"/></g></svg>
<div class="t" style="left:650px;top:359px;font-size:11px;color:#000;">Здание караула. Спецкомендатура (убежище)</div>
<svg style="position:absolute;left:578px;top:376px" width="9" height="9" viewBox="0 0 9 9"><rect x="0.5" y="0.5" width="8" height="8" fill="#fff" stroke="#747474"/><rect x="2" y="4" width="5" height="1" fill="#000"/></svg>
<div style="left:588px;top:380px;width:7px;height:1px;background:repeating-linear-gradient(90deg,#a0a0a0 0 1px,transparent 1px 2px)"></div>
<svg style="position:absolute;left:595px;top:374px" width="11" height="11" viewBox="0 0 11 11"><rect x="0.5" y="0.5" width="10" height="10" fill="#fff" stroke="#6e6e6e"/><path d="M2.4 5.2 L4.4 7.6 L8.6 2.6" stroke="#000" stroke-width="2" fill="none" stroke-linejoin="miter"/></svg>
<svg style="position:absolute;left:608px;top:372px" width="18" height="17" viewBox="0 0 18 17"><defs><linearGradient id="bg1" x1="0" y1="1" x2="1" y2="0"><stop offset="0" stop-color="#08b010"/><stop offset="0.6" stop-color="#20d830"/><stop offset="1" stop-color="#50e860"/></linearGradient></defs>
<path d="M1 10 L11.5 14 L11.5 16.2 L1 12.2 Z" fill="#f4fff4" stroke="#909890" stroke-width="0.6"/>
<path d="M2.5 11.6 L11 14.8" stroke="#40c040" stroke-width="0.9" stroke-dasharray="1.2 1.3"/>
<path d="M11.5 14 L17.5 5.5 L17.5 7.5 L11.5 16.2 Z" fill="#c8d8c8" stroke="#909890" stroke-width="0.6"/>
<path d="M1 10 L8.5 1.5 L17.5 3.5 L17.5 5.5 L11.5 14 Z" fill="url(#bg1)"/>
<path d="M10 3.5 L14.5 4.5" stroke="#a8f0b0" stroke-width="1.5"/></svg>
<div class="t" style="left:630px;top:375px;font-size:11px;color:#000;">Сети связи: Телефонная связь, Часофикация, Радиофикация</div>
<svg style="position:absolute;left:614px;top:390px" width="11" height="11" viewBox="0 0 11 11"><rect x="0.5" y="0.5" width="10" height="10" fill="#fff" stroke="#6e6e6e"/><path d="M2.4 5.2 L4.4 7.6 L8.6 2.6" stroke="#000" stroke-width="2" fill="none" stroke-linejoin="miter"/></svg>
<div style="left:601px;top:396px;width:13px;height:1px;background:repeating-linear-gradient(90deg,#a0a0a0 0 1px,transparent 1px 2px)"></div>
<svg style="position:absolute;left:629px;top:388px" width="14" height="16" viewBox="0 0 14 16"><rect x="2.5" y="0.5" width="11" height="14" fill="#fff8b8" stroke="#a8a8a8"/>
<rect x="12" y="1" width="1.2" height="13" fill="#f0f060"/>
<path d="M0.5 2.5 H7.5 L11.5 6.5 V15.5 H0.5 Z" fill="#80f898" stroke="#909090"/>
<rect x="1" y="3" width="3" height="6" fill="#d0ffd8"/>
<path d="M7.5 2.5 V6.5 H11.5" fill="#d8ffe0" stroke="#909090"/>
<g stroke="#606060" stroke-width="1"><path d="M2 5.5 H5"/><path d="M2 7.5 H5"/><path d="M2 9.5 H5"/><path d="M2 11.5 H5"/></g></svg>
<div class="t" style="left:650px;top:391px;font-size:11px;color:#000;">Телефонная связь</div>
<svg style="position:absolute;left:614px;top:406px" width="11" height="11" viewBox="0 0 11 11"><rect x="0.5" y="0.5" width="10" height="10" fill="#fff" stroke="#6e6e6e"/><path d="M2.4 5.2 L4.4 7.6 L8.6 2.6" stroke="#000" stroke-width="2" fill="none" stroke-linejoin="miter"/></svg>
<div style="left:601px;top:412px;width:13px;height:1px;background:repeating-linear-gradient(90deg,#a0a0a0 0 1px,transparent 1px 2px)"></div>
<svg style="position:absolute;left:629px;top:404px" width="14" height="16" viewBox="0 0 14 16"><rect x="2.5" y="0.5" width="11" height="14" fill="#fff8b8" stroke="#a8a8a8"/>
<rect x="12" y="1" width="1.2" height="13" fill="#f0f060"/>
<path d="M0.5 2.5 H7.5 L11.5 6.5 V15.5 H0.5 Z" fill="#80f898" stroke="#909090"/>
<rect x="1" y="3" width="3" height="6" fill="#d0ffd8"/>
<path d="M7.5 2.5 V6.5 H11.5" fill="#d8ffe0" stroke="#909090"/>
<g stroke="#606060" stroke-width="1"><path d="M2 5.5 H5"/><path d="M2 7.5 H5"/><path d="M2 9.5 H5"/><path d="M2 11.5 H5"/></g></svg>
<div class="t" style="left:650px;top:407px;font-size:11px;color:#000;">Часофикация</div>
<svg style="position:absolute;left:614px;top:422px" width="11" height="11" viewBox="0 0 11 11"><rect x="0.5" y="0.5" width="10" height="10" fill="#fff" stroke="#6e6e6e"/><path d="M2.4 5.2 L4.4 7.6 L8.6 2.6" stroke="#000" stroke-width="2" fill="none" stroke-linejoin="miter"/></svg>
<div style="left:601px;top:428px;width:13px;height:1px;background:repeating-linear-gradient(90deg,#a0a0a0 0 1px,transparent 1px 2px)"></div>
<svg style="position:absolute;left:629px;top:420px" width="14" height="16" viewBox="0 0 14 16"><rect x="2.5" y="0.5" width="11" height="14" fill="#fff8b8" stroke="#a8a8a8"/>
<rect x="12" y="1" width="1.2" height="13" fill="#f0f060"/>
<path d="M0.5 2.5 H7.5 L11.5 6.5 V15.5 H0.5 Z" fill="#80f898" stroke="#909090"/>
<rect x="1" y="3" width="3" height="6" fill="#d0ffd8"/>
<path d="M7.5 2.5 V6.5 H11.5" fill="#d8ffe0" stroke="#909090"/>
<g stroke="#606060" stroke-width="1"><path d="M2 5.5 H5"/><path d="M2 7.5 H5"/><path d="M2 9.5 H5"/><path d="M2 11.5 H5"/></g></svg>
<div class="t" style="left:650px;top:423px;font-size:11px;color:#000;">Радиофикация</div>
<svg style="position:absolute;left:614px;top:438px" width="11" height="11" viewBox="0 0 11 11"><rect x="0.5" y="0.5" width="10" height="10" fill="#fff" stroke="#6e6e6e"/><path d="M2.4 5.2 L4.4 7.6 L8.6 2.6" stroke="#000" stroke-width="2" fill="none" stroke-linejoin="miter"/></svg>
<div style="left:601px;top:444px;width:13px;height:1px;background:repeating-linear-gradient(90deg,#a0a0a0 0 1px,transparent 1px 2px)"></div>
<svg style="position:absolute;left:629px;top:436px" width="14" height="16" viewBox="0 0 14 16"><rect x="2.5" y="0.5" width="11" height="14" fill="#fff8b8" stroke="#a8a8a8"/>
<rect x="12" y="1" width="1.2" height="13" fill="#f0f060"/>
<path d="M0.5 2.5 H7.5 L11.5 6.5 V15.5 H0.5 Z" fill="#80f898" stroke="#909090"/>
<rect x="1" y="3" width="3" height="6" fill="#d0ffd8"/>
<path d="M7.5 2.5 V6.5 H11.5" fill="#d8ffe0" stroke="#909090"/>
<g stroke="#606060" stroke-width="1"><path d="M2 5.5 H5"/><path d="M2 7.5 H5"/><path d="M2 9.5 H5"/><path d="M2 11.5 H5"/></g></svg>
<div class="t" style="left:650px;top:439px;font-size:11px;color:#000;">Монтажные работы</div>
<svg style="position:absolute;left:614px;top:454px" width="11" height="11" viewBox="0 0 11 11"><rect x="0.5" y="0.5" width="10" height="10" fill="#fff" stroke="#6e6e6e"/><path d="M2.4 5.2 L4.4 7.6 L8.6 2.6" stroke="#000" stroke-width="2" fill="none" stroke-linejoin="miter"/></svg>
<div style="left:601px;top:460px;width:13px;height:1px;background:repeating-linear-gradient(90deg,#a0a0a0 0 1px,transparent 1px 2px)"></div>
<svg style="position:absolute;left:629px;top:452px" width="14" height="16" viewBox="0 0 14 16"><rect x="2.5" y="0.5" width="11" height="14" fill="#fff8b8" stroke="#a8a8a8"/>
<rect x="12" y="1" width="1.2" height="13" fill="#f0f060"/>
<path d="M0.5 2.5 H7.5 L11.5 6.5 V15.5 H0.5 Z" fill="#80f898" stroke="#909090"/>
<rect x="1" y="3" width="3" height="6" fill="#d0ffd8"/>
<path d="M7.5 2.5 V6.5 H11.5" fill="#d8ffe0" stroke="#909090"/>
<g stroke="#606060" stroke-width="1"><path d="M2 5.5 H5"/><path d="M2 7.5 H5"/><path d="M2 9.5 H5"/><path d="M2 11.5 H5"/></g></svg>
<div class="t" style="left:650px;top:455px;font-size:11px;color:#000;">Строительные работы</div>
<svg style="position:absolute;left:614px;top:470px" width="11" height="11" viewBox="0 0 11 11"><rect x="0.5" y="0.5" width="10" height="10" fill="#fff" stroke="#6e6e6e"/><path d="M2.4 5.2 L4.4 7.6 L8.6 2.6" stroke="#000" stroke-width="2" fill="none" stroke-linejoin="miter"/></svg>
<div style="left:601px;top:476px;width:13px;height:1px;background:repeating-linear-gradient(90deg,#a0a0a0 0 1px,transparent 1px 2px)"></div>
<svg style="position:absolute;left:629px;top:468px" width="14" height="16" viewBox="0 0 14 16"><rect x="2.5" y="0.5" width="11" height="14" fill="#fff8b8" stroke="#a8a8a8"/>
<rect x="12" y="1" width="1.2" height="13" fill="#f0f060"/>
<path d="M0.5 2.5 H7.5 L11.5 6.5 V15.5 H0.5 Z" fill="#80f898" stroke="#909090"/>
<rect x="1" y="3" width="3" height="6" fill="#d0ffd8"/>
<path d="M7.5 2.5 V6.5 H11.5" fill="#d8ffe0" stroke="#909090"/>
<g stroke="#606060" stroke-width="1"><path d="M2 5.5 H5"/><path d="M2 7.5 H5"/><path d="M2 9.5 H5"/><path d="M2 11.5 H5"/></g></svg>
<div class="t" style="left:650px;top:471px;font-size:11px;color:#000;">Наружные сети</div>
<div style="left:601px;top:212px;width:1px;height:41px;background:repeating-linear-gradient(180deg,#a0a0a0 0 1px,transparent 1px 2px)"></div>
<div style="left:601px;top:276px;width:1px;height:9px;background:repeating-linear-gradient(180deg,#a0a0a0 0 1px,transparent 1px 2px)"></div>
<div style="left:601px;top:308px;width:1px;height:25px;background:repeating-linear-gradient(180deg,#a0a0a0 0 1px,transparent 1px 2px)"></div>
<div style="left:601px;top:356px;width:1px;height:9px;background:repeating-linear-gradient(180deg,#a0a0a0 0 1px,transparent 1px 2px)"></div>
<div style="left:601px;top:388px;width:1px;height:89px;background:repeating-linear-gradient(180deg,#a0a0a0 0 1px,transparent 1px 2px)"></div>
<div style="left:572px;top:969px;width:1335px;height:30px;box-sizing:border-box;border:1px solid #adadad;border-radius:3px;background:linear-gradient(180deg,#ffffff,#fcfcfc)"></div>
<svg style="position:absolute;left:1208px;top:978px" width="14" height="12" viewBox="0 0 14 12"><path d="M1.5 6.5 L5 10 L12.5 2.5" stroke="#6aa040" stroke-width="3" fill="none" stroke-linecap="round"/><path d="M1.5 6.5 L5 10 L12.5 2.5" stroke="#b0ee80" stroke-width="1.6" fill="none" stroke-linecap="round"/></svg>
<div class="t" style="left:1228px;top:979px;font-size:11px;color:#000;">Открыть</div>
<div style="left:0px;top:1008px;width:1920px;height:32px;background:#f0f0f0"></div>
<div style="left:0px;top:1008px;width:1920px;height:1px;background:#ffffff"></div>
<div style="left:3px;top:1011px;width:84px;height:1px;background:#a0a0a0"></div>
<div style="left:3px;top:1011px;width:1px;height:25px;background:#a0a0a0"></div>
<div style="left:3px;top:1036px;width:85px;height:1px;background:#ffffff"></div>
<div style="left:87px;top:1011px;width:1px;height:26px;background:#ffffff"></div>
<div style="left:92px;top:1011px;width:296px;height:1px;background:#a0a0a0"></div>
<div style="left:92px;top:1011px;width:1px;height:25px;background:#a0a0a0"></div>
<div style="left:92px;top:1036px;width:297px;height:1px;background:#ffffff"></div>
<div style="left:388px;top:1011px;width:1px;height:26px;background:#ffffff"></div>
<div style="left:392px;top:1011px;width:1456px;height:1px;background:#a0a0a0"></div>
<div style="left:392px;top:1011px;width:1px;height:25px;background:#a0a0a0"></div>
<div style="left:392px;top:1036px;width:1457px;height:1px;background:#ffffff"></div>
<div style="left:1848px;top:1011px;width:1px;height:26px;background:#ffffff"></div>
<div style="left:1853px;top:1011px;width:29px;height:1px;background:#a0a0a0"></div>
<div style="left:1853px;top:1011px;width:1px;height:25px;background:#a0a0a0"></div>
<div style="left:1853px;top:1036px;width:30px;height:1px;background:#ffffff"></div>
<div style="left:1882px;top:1011px;width:1px;height:26px;background:#ffffff"></div>
<div style="left:1887px;top:1011px;width:29px;height:1px;background:#a0a0a0"></div>
<div style="left:1887px;top:1011px;width:1px;height:25px;background:#a0a0a0"></div>
<div style="left:1887px;top:1036px;width:30px;height:1px;background:#ffffff"></div>
<div style="left:1916px;top:1011px;width:1px;height:26px;background:#ffffff"></div>
<div style="left:89px;top:1009px;width:1px;height:30px;background:#a0a0a0"></div>
<div style="left:90px;top:1009px;width:1px;height:30px;background:#ffffff"></div>
<div style="left:389px;top:1009px;width:1px;height:30px;background:#a0a0a0"></div>
<div style="left:390px;top:1009px;width:1px;height:30px;background:#ffffff"></div>
<div style="left:1850px;top:1009px;width:1px;height:30px;background:#a0a0a0"></div>
<div style="left:1851px;top:1009px;width:1px;height:30px;background:#ffffff"></div>
<div style="left:1884px;top:1009px;width:1px;height:30px;background:#a0a0a0"></div>
<div style="left:1885px;top:1009px;width:1px;height:30px;background:#ffffff"></div>
<div style="left:1918px;top:1009px;width:1px;height:30px;background:#a0a0a0"></div>
<div style="left:1919px;top:1009px;width:1px;height:30px;background:#ffffff"></div>
<div style="left:0px;top:1038px;width:1920px;height:1px;background:#a0a0a0"></div>
<div style="left:0px;top:1039px;width:1920px;height:1px;background:#ffffff"></div>
<svg style="position:absolute;left:1860px;top:1014px" width="16" height="17" viewBox="0 0 16 17"><circle cx="8" cy="8.5" r="7.5" fill="#1f6ec8"/><ellipse cx="8" cy="4" rx="4.5" ry="1.8" fill="#fff"/><path d="M3.5 7 Q8 10 12.5 7 M3.5 10 Q8 13 12.5 10" stroke="#fff" stroke-width="1.4" fill="none"/></svg>
<div class="t" style="left:1894px;top:1018px;font-size:12px;color:#000;">RU</div>
<div style="left:0px;top:1040px;width:1920px;height:40px;background:linear-gradient(90deg,#225e90 0%,#2a6a9c 4%,#3a86bc 10%,#4aa2d6 18%,#48a0d4 35%,#3f94cf 48%,#2f82c6 58%,#2b78c0 66%,#2268b4 75%,#1e5ea8 84%,#1e5aa2 90%,#183e70 97%,#18406e 100%)"></div>
<div style="left:0px;top:1040px;width:1920px;height:1px;background:#0e1620"></div>
<svg style="position:absolute;left:1280px;top:1041px;filter:blur(1.2px)" width="130" height="39"><path d="M18 -2 Q55 14 102 41" stroke="rgba(190,225,255,0.65)" stroke-width="11" fill="none"/></svg>
<div style="left:0px;top:1042px;width:1920px;height:18px;background:linear-gradient(180deg,rgba(255,255,255,0.12),rgba(255,255,255,0.0))"></div>
<svg style="position:absolute;left:6px;top:1041px" width="42" height="39" viewBox="0 0 42 39"><defs><linearGradient id="orb" x1="0" y1="0" x2="0" y2="1"><stop offset="0" stop-color="#a8c8e0"/><stop offset="0.45" stop-color="#3a78b0"/><stop offset="0.55" stop-color="#0f3d70"/><stop offset="0.85" stop-color="#1870b8"/><stop offset="1" stop-color="#30d8fa"/></linearGradient></defs>
<circle cx="21" cy="20" r="18" fill="url(#orb)" stroke="#0e2a48" stroke-width="1.2"/>
<circle cx="21" cy="20" r="17" fill="none" stroke="rgba(200,230,255,0.5)" stroke-width="0.8"/>
<path d="M13 12 Q17 10 22 13 L20.5 20 Q16 17.5 11.5 19.5 Z" fill="#f06020"/><path d="M23 13 Q27 15 32 13 L30.5 20 Q26 22 21.5 20 Z" fill="#90c840"/>
<path d="M11.3 20.5 Q15.5 18.5 20.3 21 L18.8 28 Q14.5 25.5 9.8 27.5 Z" fill="#30a8f0"/><path d="M21.3 21 Q25.5 23 30.3 21 L28.8 28 Q24.5 30 19.8 28 Z" fill="#fcc020"/></svg>
<div style="left:60px;top:1041px;width:58px;height:38px;box-sizing:border-box;border:1px solid rgba(10,25,45,0.75);box-shadow:inset 0 0 0 1px rgba(255,255,255,0.45);border-radius:3px;background:linear-gradient(170deg,rgba(255,255,255,0.5),rgba(255,255,255,0.2) 45%,rgba(255,255,255,0.06))"></div>
<div style="left:122px;top:1041px;width:58px;height:38px;box-sizing:border-box;border:1px solid rgba(10,25,45,0.75);box-shadow:inset 0 0 0 1px rgba(255,255,255,0.45);border-radius:3px;background:linear-gradient(170deg,rgba(255,255,255,0.5),rgba(255,255,255,0.2) 45%,rgba(255,255,255,0.06))"></div>
<div style="left:184px;top:1041px;width:58px;height:38px;box-sizing:border-box;border:1px solid rgba(10,25,45,0.75);box-shadow:inset 0 0 0 1px rgba(255,255,255,0.45);border-radius:3px;background:linear-gradient(170deg,rgba(255,255,255,0.5),rgba(255,255,255,0.2) 45%,rgba(255,255,255,0.06))"></div>
<div style="left:246px;top:1041px;width:58px;height:38px;box-sizing:border-box;border:1px solid rgba(10,25,45,0.75);box-shadow:inset 0 0 0 1px rgba(255,255,255,0.45);border-radius:3px;background:linear-gradient(170deg,rgba(255,255,255,0.5),rgba(255,255,255,0.2) 45%,rgba(255,255,255,0.06))"></div>
<div style="left:308px;top:1041px;width:51px;height:38px;box-sizing:border-box;border:1px solid rgba(10,25,45,0.75);box-shadow:inset 0 0 0 1px rgba(255,255,255,0.45);border-radius:3px;background:linear-gradient(170deg,rgba(255,255,255,0.5),rgba(255,255,255,0.2) 45%,rgba(255,255,255,0.06))"></div>
<div style="left:370px;top:1041px;width:58px;height:38px;box-sizing:border-box;border:1px solid rgba(10,25,45,0.75);box-shadow:inset 0 0 0 1px rgba(255,255,255,0.45);border-radius:3px;background:linear-gradient(170deg,rgba(255,255,255,0.5),rgba(255,255,255,0.2) 45%,rgba(255,255,255,0.06))"></div>
<div style="left:431px;top:1041px;width:55px;height:38px;box-sizing:border-box;border:1px solid rgba(10,25,45,0.75);box-shadow:inset 0 0 0 1px rgba(255,255,255,0.45);border-radius:3px;background:linear-gradient(170deg,rgba(255,255,255,0.62),rgba(255,255,255,0.3) 45%,rgba(255,255,255,0.12))"></div>
<div style="left:361px;top:1042px;width:3px;height:36px;border-right:1px solid rgba(255,255,255,0.35);box-sizing:border-box"></div>
<div style="left:365px;top:1042px;width:3px;height:36px;border-right:1px solid rgba(255,255,255,0.35);box-sizing:border-box"></div>
<svg style="position:absolute;left:72px;top:1044px" width="34" height="34" viewBox="0 0 34 34"><circle cx="17" cy="17" r="16" fill="#db4437"/><path d="M17 17 L3.2 9 A16 16 0 0 1 30.9 9 Z" fill="#db4437"/><path d="M17 17 L30.9 9 A16 16 0 0 1 17 33 Z" fill="#f4c20d"/><path d="M17 17 L17 33 A16 16 0 0 1 3.2 9 Z" fill="#0f9d58"/><circle cx="17" cy="17" r="7.5" fill="#fff"/><circle cx="17" cy="17" r="5.8" fill="#4285f4"/></svg>
<svg style="position:absolute;left:134px;top:1045px" width="32" height="32" viewBox="0 0 32 32"><rect x="6" y="3" width="24" height="26" fill="#fff" stroke="#8aa8d8"/><path d="M10 9 H27 M10 13 H27 M10 17 H27 M10 21 H27" stroke="#c0d0e8"/><rect x="2" y="4" width="22" height="21" rx="2" fill="#2a5cb8"/><text x="4" y="21" font-family="Liberation Sans" font-weight="bold" font-size="17" fill="#fff">W</text></svg>
<svg style="position:absolute;left:196px;top:1043px" width="32" height="32" viewBox="0 0 32 32"><defs><linearGradient id="olg" x1="0" y1="0" x2="1" y2="1"><stop offset="0" stop-color="#fbd15a"/><stop offset="0.6" stop-color="#fff2c8"/><stop offset="1" stop-color="#ffe8a0"/></linearGradient></defs><rect x="2" y="2" width="28" height="28" rx="1.5" fill="url(#olg)" stroke="#f0a020" stroke-width="1.5"/><path d="M10 22 L28 16 V29 H10 Z" fill="#fff" stroke="#e8d0a0" stroke-width="0.8"/><ellipse cx="11" cy="14" rx="5" ry="7" fill="none" stroke="#e88010" stroke-width="4"/><circle cx="24" cy="15" r="4.5" fill="#fff8e0" stroke="#e0a030" stroke-width="1.2"/><path d="M23 13 L24 15.5 L26 14.5" stroke="#c07010" stroke-width="0.8" fill="none"/></svg>
<svg style="position:absolute;left:258px;top:1043px" width="34" height="36" viewBox="0 0 34 36"><g stroke="#ffffff" stroke-opacity="0.35" stroke-width="0.6"><rect x="3" y="3" width="6" height="6" fill="#d84830"/><rect x="9" y="6" width="7" height="7" fill="#d84830"/><rect x="16" y="6" width="7" height="7" fill="#d84830"/><rect x="9" y="13" width="7" height="7" fill="#d84830"/><rect x="2" y="13" width="7" height="7" fill="#3a70c8"/><rect x="16" y="13" width="7" height="7" fill="#3a78d0"/><rect x="2" y="20" width="7" height="7" fill="#3a70c8"/><rect x="9" y="20" width="7" height="7" fill="#3a70c8"/><rect x="16" y="20" width="7" height="7" fill="#3a78d0"/><rect x="23" y="23" width="7" height="7" fill="#3a78d0"/></g><path d="M3 3 L5 1 H11 L9 3 Z M9 6 L11 4 H25 L23 6 Z" fill="#f08070"/><path d="M23 23 L25 21 H32 L30 23 Z" fill="#80b0f0"/></svg>
<svg style="position:absolute;left:315px;top:1043px" width="36" height="34" viewBox="0 0 36 34"><path d="M3 6 H13 L15 8 H33 V28 H3 Z" fill="#f0d890" stroke="#d0b060" stroke-width="0.8"/><rect x="6" y="4" width="10" height="5" fill="#f8f0d8" stroke="#c8b070" stroke-width="0.6"/><rect x="15" y="7" width="10" height="5" fill="#f8f0d8" stroke="#c8b070" stroke-width="0.6"/><rect x="22" y="9" width="10" height="5" fill="#f8f0d8" stroke="#c8b070" stroke-width="0.6"/><rect x="7" y="5" width="3" height="2" fill="#20b020"/><rect x="17" y="8" width="3" height="2" fill="#e03030"/><rect x="24" y="10" width="3" height="2" fill="#2090e0"/><path d="M3 12 H33 V30 H3 Z" fill="#f8e0a0" stroke="#d8b868" stroke-width="0.8"/><path d="M10 31 V21 Q10 19 12 19 H25 Q27 19 27 21 V31 H23 V24 H14 V31 Z" fill="#a8dcf4" stroke="#70b8e0" stroke-width="0.8"/><path d="M12 14 L13 22" stroke="#fff" stroke-width="1" opacity="0.8"/></svg>
<svg style="position:absolute;left:382px;top:1043px" width="34" height="34" viewBox="0 0 34 34"><path d="M5 3 H27 L31 7 V30 H5 Z" fill="#f4fbf4" stroke="#3a9a4a" stroke-width="1.2"/><path d="M15 16 L32 21 L29 30 L12 25 Z" fill="#fff" stroke="#a0c8a8" stroke-width="0.6"/><path d="M14 19 L30 23.5 M13.5 22 L29.5 26.5" stroke="#80c090" stroke-width="0.8"/><path d="M7 7 H14 L17.5 13 L21 7 H27 L21 16.5 L27 27 H20 L17 21 L14 27 H7 L13.5 16.5 Z" fill="#2e9a40"/><path d="M7 7 H14 L17.5 13 L14 15 Z" fill="#60c060" opacity="0.7"/></svg>
<svg style="position:absolute;left:442px;top:1044px" width="32" height="32" viewBox="0 0 32 32"><defs><linearGradient id="ga3" x1="0" y1="0" x2="0" y2="1"><stop offset="0" stop-color="#fdb81e"/><stop offset="1" stop-color="#f07820"/></linearGradient></defs>
<svg viewBox="0 0 32 32" width="32" height="32"><rect x="0.5" y="0.5" width="31" height="31" fill="url(#ga3)" stroke="#d88010"/>
<g fill="#fff"><path d="M15.5 9.5 Q17.5 4.5 23.5 4.8 Q28 5 27.6 9.5 L26.2 15.5 Q25 10.5 20.5 11.2 Q16.5 12.2 15.5 9.5 Z" transform="rotate(0 16 16.5)"/><path d="M15.5 9.5 Q17.5 4.5 23.5 4.8 Q28 5 27.6 9.5 L26.2 15.5 Q25 10.5 20.5 11.2 Q16.5 12.2 15.5 9.5 Z" transform="rotate(90 16 16.5)"/><path d="M15.5 9.5 Q17.5 4.5 23.5 4.8 Q28 5 27.6 9.5 L26.2 15.5 Q25 10.5 20.5 11.2 Q16.5 12.2 15.5 9.5 Z" transform="rotate(180 16 16.5)"/><path d="M15.5 9.5 Q17.5 4.5 23.5 4.8 Q28 5 27.6 9.5 L26.2 15.5 Q25 10.5 20.5 11.2 Q16.5 12.2 15.5 9.5 Z" transform="rotate(270 16 16.5)"/><circle cx="16" cy="16.5" r="2.6"/></g></svg></svg>
<div class="t" style="left:1679px;top:1052px;font-size:12px;color:#ffffff;">RU</div>
<svg style="position:absolute;left:1710px;top:1053px" width="18" height="16" viewBox="0 0 18 16"><path d="M1 5 H4 L8 1 V15 L4 11 H1 Z" fill="#fff"/><path d="M10.5 5 Q12 8 10.5 11 M13 3 Q16 8 13 13" stroke="#fff" stroke-width="1.2" fill="none"/></svg>
<svg style="position:absolute;left:1734px;top:1053px" width="16" height="16" viewBox="0 0 16 16"><rect x="0" y="0" width="16" height="16" fill="#f03a30"/><path d="M4 8.5 L7 5.5 L10 8.5 L7 11.5 Z M8 8.5 L11 5.5 L14 8.5 L11 11.5 Z" fill="#fff"/></svg>
<svg style="position:absolute;left:1758px;top:1053px" width="16" height="16" viewBox="0 0 16 16"><rect x="0.5" y="0.5" width="15" height="15" fill="#fcd848" stroke="#d89010"/><ellipse cx="8" cy="8" rx="3.6" ry="4.6" fill="none" stroke="#c87010" stroke-width="2.6"/></svg>
<svg style="position:absolute;left:1782px;top:1053px" width="18" height="17" viewBox="0 0 18 17"><rect x="1" y="1" width="16" height="12" fill="#203050" stroke="#c0c8d0"/><path d="M4 10 L7 5 L10 8 L14 3" stroke="#60b0ff" stroke-width="1.5" fill="none"/><rect x="7" y="13" width="4" height="3" fill="#c0c8d0"/></svg>
<svg style="position:absolute;left:1806px;top:1053px" width="18" height="17" viewBox="0 0 18 17"><rect x="5.5" y="5.5" width="11" height="8" fill="none" stroke="#fff"/><rect x="2" y="1" width="3" height="5" fill="#fff"/><path d="M3.5 6 V12 H5" stroke="#fff"/><path d="M8 15 H14" stroke="#fff" stroke-width="1.5"/></svg>
<div class="t" style="left:1567px;width:600px;text-align:center;top:1048px;font-size:11px;color:#ffffff;">15:29</div>
<div class="t" style="left:1567px;width:600px;text-align:center;top:1065px;font-size:11px;color:#ffffff;">11.01.2023</div>
<div style="left:1906px;top:1040px;width:14px;height:40px;box-sizing:border-box;border-left:1px solid rgba(0,0,0,0.5);background:linear-gradient(90deg,rgba(255,255,255,0.25),rgba(255,255,255,0.1));box-shadow:inset 1px 0 rgba(255,255,255,0.35)"></div>
<div style="left:754px;top:453px;width:419px;height:184px;border-radius:7px;box-shadow:3px 4px 10px 3px rgba(0,0,0,0.5),0 0 6px 1px rgba(0,0,0,0.25)"></div>
<div style="left:754px;top:453px;width:419px;height:184px;box-sizing:border-box;border:1px solid #2a3440;border-radius:7px;background:linear-gradient(100deg,#b0d0ec 0%,#d8e8f8 25%,#bad8f2 45%,#cce2f6 60%,#b8d6f2 80%,#c8e2f8 100%)"></div>
<div style="left:755px;top:454px;width:417px;height:182px;box-sizing:border-box;border:1px solid rgba(255,255,255,0.6);border-radius:6px"></div>
<div class="t" style="left:762px;top:462px;font-size:12px;color:#000;">Предупреждение</div>
<div style="left:1119px;top:454px;width:47px;height:19px;box-sizing:border-box;border:1px solid #6e2a22;border-top:none;border-radius:0 0 4px 4px;background:linear-gradient(180deg,#e8a098 0%,#d88078 45%,#c84030 50%,#c84832 75%,#e0907a 100%)"></div>
<svg style="position:absolute;left:1131px;top:455px" width="24" height="16" viewBox="0 0 24 16"><path d="M8 4 L15 11 M15 4 L8 11" stroke="#3a2a2a" stroke-width="3.6" stroke-linecap="round"/><path d="M8 4 L15 11 M15 4 L8 11" stroke="#f4f4f4" stroke-width="2" stroke-linecap="round"/></svg>
<div style="left:760px;top:482px;width:406px;height:148px;box-sizing:border-box;border:1px solid #4a5a6a;background:#f0f0f0"></div>
<div style="left:761px;top:483px;width:404px;height:97px;background:#ffffff"></div>
<svg style="position:absolute;left:785px;top:511px" width="33" height="31" viewBox="0 0 33 31"><defs><linearGradient id="wg" x1="0" y1="0" x2="0" y2="1"><stop offset="0" stop-color="#fff060"/><stop offset="1" stop-color="#e0a800"/></linearGradient></defs>
<path d="M16.5 1.5 L31.5 28.5 H1.5 Z" fill="url(#wg)" stroke="#b0b0b0" stroke-width="1.5" stroke-linejoin="round"/>
<rect x="14.5" y="9" width="4" height="12" rx="1" fill="#202020"/><rect x="14.5" y="23" width="4" height="3.5" rx="0.8" fill="#202020"/></svg>
<div class="t" style="left:826px;top:512px;font-size:12px;color:#000;">Исключительная ситуация EComponentError в модуле</div>
<div class="t" style="left:826px;top:527px;font-size:12px;color:#000;">AtomSmeta.exe.</div>
<div class="t" style="left:826px;top:542px;font-size:12px;color:#000;">Компонент с именем ASmetaPr уже существует.</div>
<div style="left:1071px;top:592px;width:88px;height:26px;box-sizing:border-box;border:1px solid #696969;background:#f0f0f0"></div>
<div style="left:1072px;top:593px;width:86px;height:24px;box-sizing:border-box;border-top:1px solid #fff;border-left:1px solid #fff;border-right:1px solid #a0a0a0;border-bottom:1px solid #a0a0a0"></div>
<div class="t" style="left:1107px;top:599px;font-size:12px;color:#000;">OK</div></body></html>
